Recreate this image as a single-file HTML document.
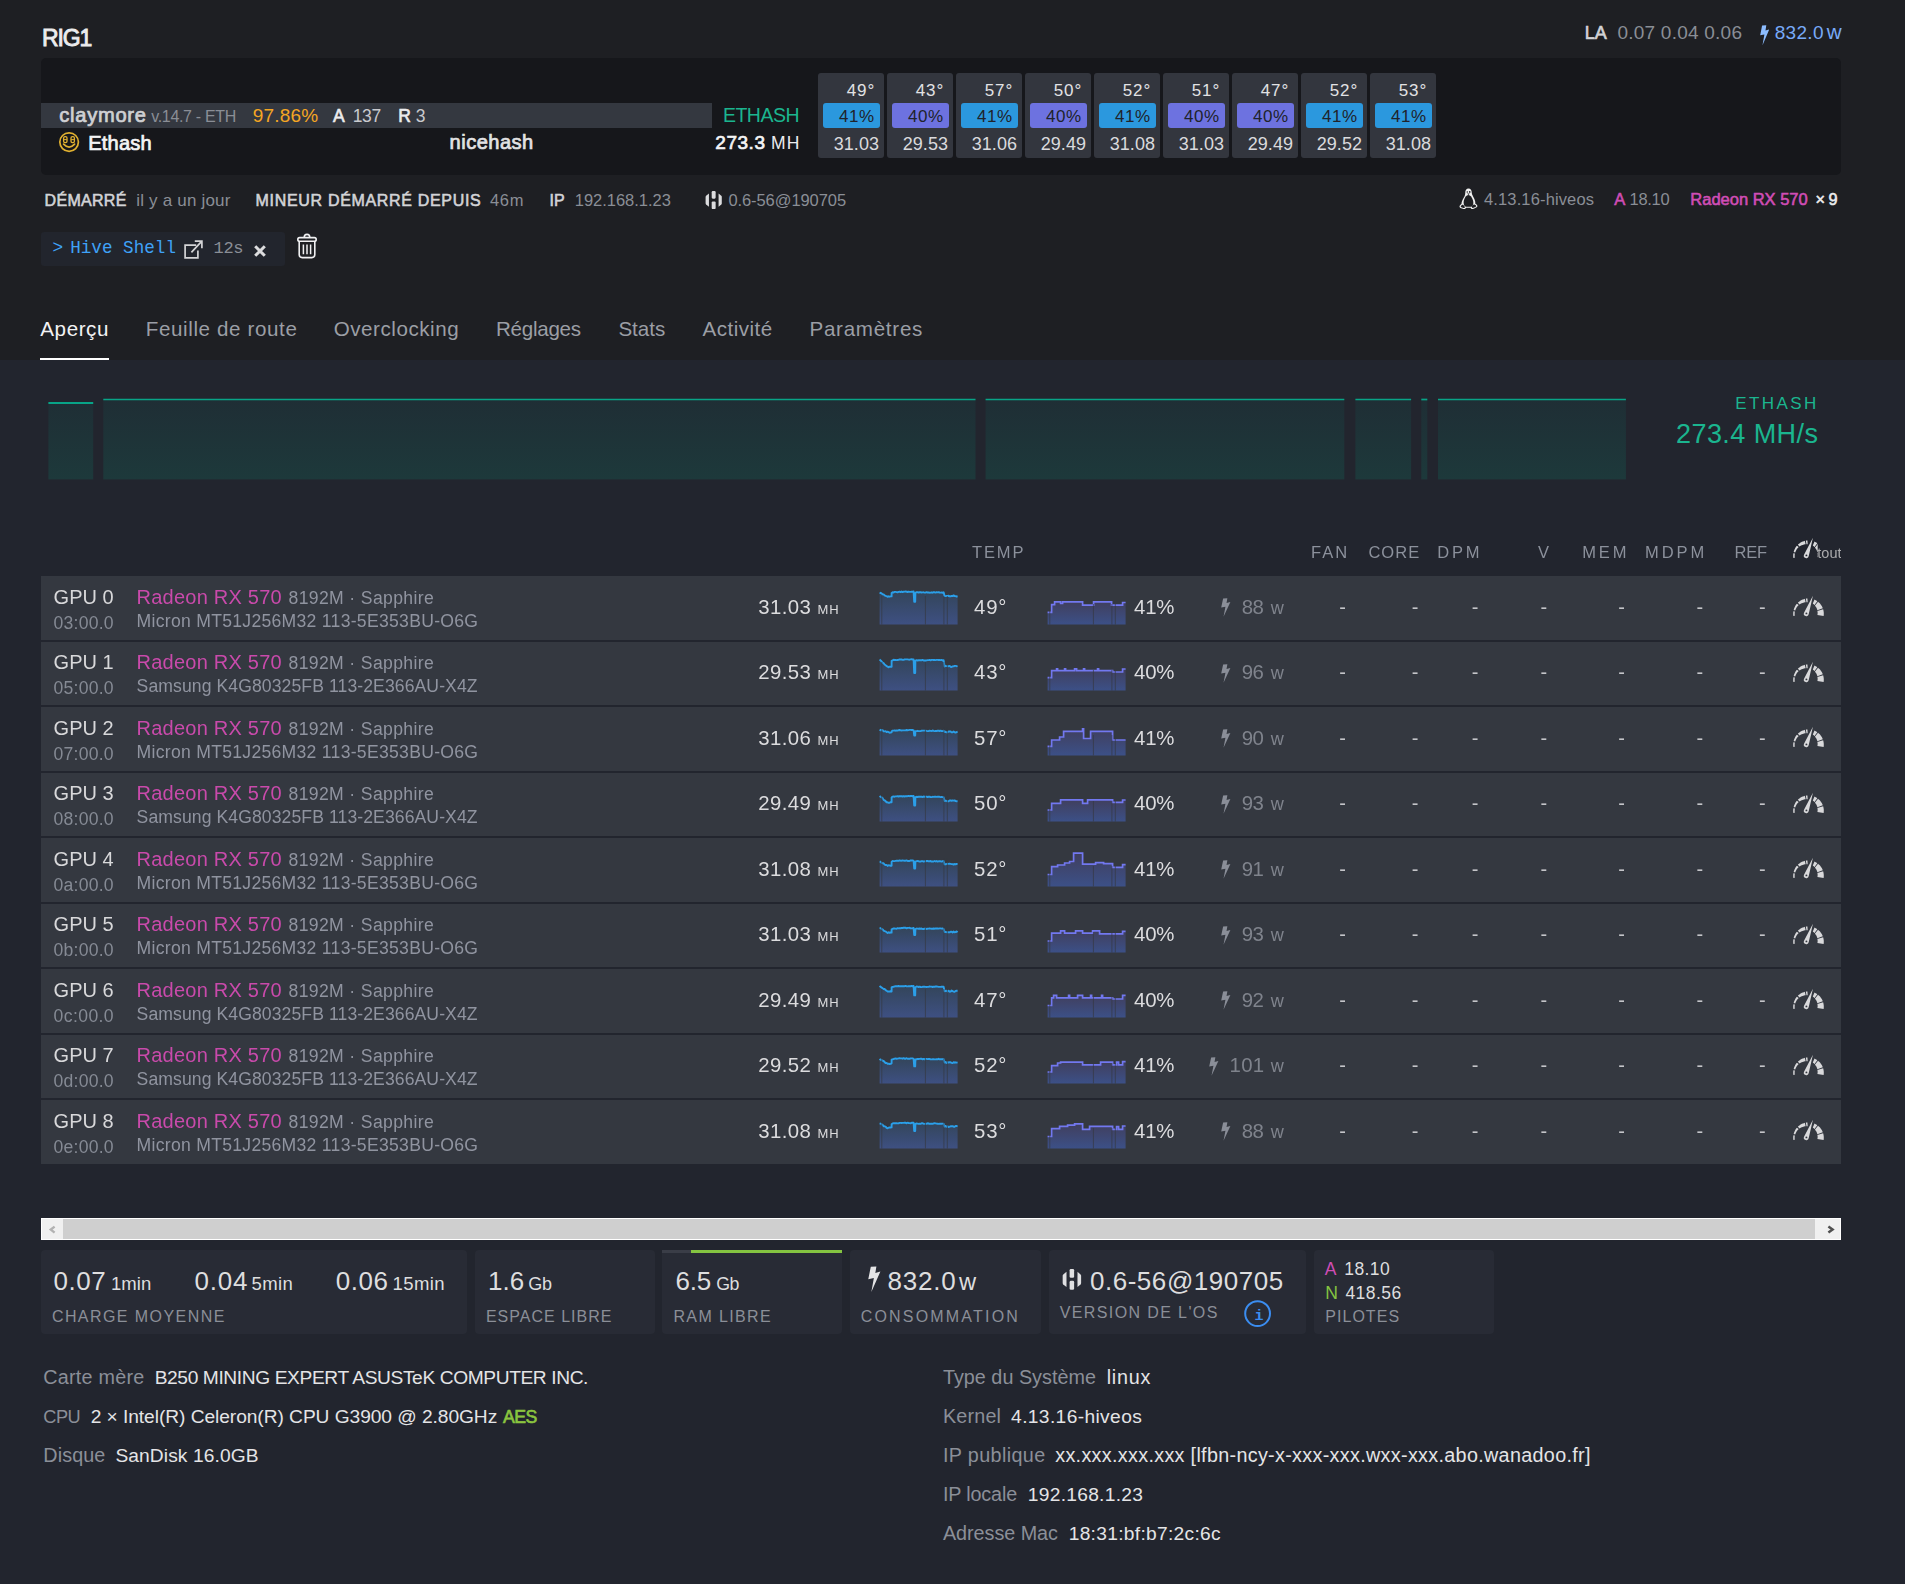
<!DOCTYPE html>
<html lang="fr"><head><meta charset="utf-8"><title>RIG1</title><style>html,body{margin:0;padding:0}body{width:1905px;height:1584px;overflow:hidden;background:#1e1f23;font-family:"Liberation Sans",sans-serif;position:relative}
.t{position:absolute;white-space:nowrap;line-height:1;display:block}.b{position:absolute;display:block}</style></head><body>
<div class="b" style="left:0px;top:360px;width:1905px;height:1224px;background:#22252e;"></div>
<span class="t" style="left:42.00px;top:27.01px;font-size:23.00px;color:#ececee;letter-spacing:-1.108px;-webkit-text-stroke:0.83px #ececee;">RIG1</span>
<span class="t" style="left:1584.80px;top:24.01px;font-size:18.00px;color:#d2d3d6;-webkit-text-stroke:0.65px #d2d3d6;">LA</span>
<span class="t" style="left:1617.40px;top:23.01px;font-size:19.00px;color:#8a8e96;letter-spacing:0.238px;">0.07 0.04 0.06</span>
<svg class="b" style="left:1759.6px;top:24.7px" width="9.6" height="20.6" viewBox="0 0 9.6 20.6" preserveAspectRatio="none"><polygon points="2.1,0.5 6.3,0.3 5.5,5.5 9.3,4.4 2.5,20.3 4.4,9.4 0.2,10.3" fill="#8cbcff"/></svg>
<span class="t" style="left:1774.70px;top:23.01px;font-size:19.00px;color:#78aaf8;letter-spacing:0.325px;">832.0</span>
<span class="t" style="left:1826.72px;top:22.02px;font-size:20.60px;color:#78aaf8;">w</span>
<div class="b" style="left:41px;top:58px;width:1800px;height:116.5px;background:#16171b;border-radius:5px;"></div>
<div class="b" style="left:41px;top:103px;width:671px;height:25px;background:#343840;"></div>
<span class="t" style="left:59.30px;top:105.00px;font-size:20.09px;color:#cfd0d3;letter-spacing:0.743px;-webkit-text-stroke:0.72px #cfd0d3;">claymore</span>
<span class="t" style="left:151.20px;top:109.00px;font-size:16.00px;color:#8a8e96;letter-spacing:-0.320px;">v.14.7 - ETH</span>
<span class="t" style="left:252.70px;top:106.01px;font-size:19.00px;color:#f5a623;letter-spacing:0.200px;">97.86%</span>
<span class="t" style="left:332.90px;top:108.00px;font-size:17.50px;color:#ececee;-webkit-text-stroke:0.63px #ececee;">A</span>
<span class="t" style="left:352.80px;top:108.00px;font-size:17.50px;color:#c9cace;letter-spacing:-0.425px;">137</span>
<span class="t" style="left:398.20px;top:108.00px;font-size:17.50px;color:#ececee;-webkit-text-stroke:0.63px #ececee;">R</span>
<span class="t" style="left:415.80px;top:108.00px;font-size:17.50px;color:#c9cace;">3</span>
<svg class="b" style="left:58px;top:131.1px" width="22" height="22" viewBox="0 0 22 22"><circle cx="11.1" cy="11.1" r="9.3" fill="none" stroke="#e0b030" stroke-width="1.7"/><path d="M5.6,13.2 Q11.1,19 16.6,13.2" fill="none" stroke="#e0b030" stroke-width="1.7" stroke-linecap="round"/><rect x="5.6" y="5.6" width="3.4" height="6" rx="1.4" fill="none" stroke="#e0b030" stroke-width="1.3"/><rect x="13" y="5.6" width="3.4" height="6" rx="1.4" fill="none" stroke="#e0b030" stroke-width="1.3"/><path d="M5.8,8.6h3M13.2,8.6h3" stroke="#e0b030" stroke-width="1"/></svg>
<span class="t" style="left:88.20px;top:132.50px;font-size:20.09px;color:#f4f4f5;letter-spacing:0.200px;-webkit-text-stroke:0.72px #f4f4f5;">Ethash</span>
<span class="t" style="left:449.60px;top:132.41px;font-size:20.09px;color:#e2e2e4;letter-spacing:0.475px;-webkit-text-stroke:0.72px #e2e2e4;">nicehash</span>
<span class="t" style="left:722.90px;top:106.01px;font-size:19.50px;color:#1bb58f;letter-spacing:-0.505px;">ETHASH</span>
<span class="t" style="left:715.30px;top:133.30px;font-size:19.00px;color:#f4f4f5;letter-spacing:0.525px;-webkit-text-stroke:0.68px #f4f4f5;">273.3</span>
<span class="t" style="left:771.10px;top:135.30px;font-size:17.50px;color:#ececee;letter-spacing:1.150px;">MH</span>
<div class="b" style="left:818px;top:73px;width:66px;height:85px;background:#33363e;border-radius:3px;"></div>
<div class="b" style="left:823px;top:103px;width:57px;height:25px;background:#2b98de;border-radius:3px;"></div>
<span class="t" style="left:846.70px;top:81.61px;font-size:17.00px;color:#e2e2e4;letter-spacing:0.975px;">49°</span>
<span class="t" style="left:838.90px;top:108.21px;font-size:17.00px;color:#20232b;letter-spacing:0.600px;">41%</span>
<span class="t" style="left:833.70px;top:134.91px;font-size:18.00px;color:#dadadd;letter-spacing:0.075px;">31.03</span>
<div class="b" style="left:887px;top:73px;width:66px;height:85px;background:#33363e;border-radius:3px;"></div>
<div class="b" style="left:892px;top:103px;width:57px;height:25px;background:#6d72e0;border-radius:3px;"></div>
<span class="t" style="left:915.70px;top:81.61px;font-size:17.00px;color:#e2e2e4;letter-spacing:0.975px;">43°</span>
<span class="t" style="left:907.90px;top:108.21px;font-size:17.00px;color:#20232b;letter-spacing:0.600px;">40%</span>
<span class="t" style="left:902.70px;top:134.91px;font-size:18.00px;color:#dadadd;letter-spacing:0.075px;">29.53</span>
<div class="b" style="left:956px;top:73px;width:66px;height:85px;background:#33363e;border-radius:3px;"></div>
<div class="b" style="left:961px;top:103px;width:57px;height:25px;background:#2b98de;border-radius:3px;"></div>
<span class="t" style="left:984.70px;top:81.61px;font-size:17.00px;color:#e2e2e4;letter-spacing:0.975px;">57°</span>
<span class="t" style="left:976.90px;top:108.21px;font-size:17.00px;color:#20232b;letter-spacing:0.600px;">41%</span>
<span class="t" style="left:971.70px;top:134.91px;font-size:18.00px;color:#dadadd;letter-spacing:0.075px;">31.06</span>
<div class="b" style="left:1025px;top:73px;width:66px;height:85px;background:#33363e;border-radius:3px;"></div>
<div class="b" style="left:1030px;top:103px;width:57px;height:25px;background:#6d72e0;border-radius:3px;"></div>
<span class="t" style="left:1053.70px;top:81.61px;font-size:17.00px;color:#e2e2e4;letter-spacing:0.975px;">50°</span>
<span class="t" style="left:1045.90px;top:108.21px;font-size:17.00px;color:#20232b;letter-spacing:0.600px;">40%</span>
<span class="t" style="left:1040.70px;top:134.91px;font-size:18.00px;color:#dadadd;letter-spacing:0.075px;">29.49</span>
<div class="b" style="left:1094px;top:73px;width:66px;height:85px;background:#33363e;border-radius:3px;"></div>
<div class="b" style="left:1099px;top:103px;width:57px;height:25px;background:#2b98de;border-radius:3px;"></div>
<span class="t" style="left:1122.70px;top:81.61px;font-size:17.00px;color:#e2e2e4;letter-spacing:0.975px;">52°</span>
<span class="t" style="left:1114.90px;top:108.21px;font-size:17.00px;color:#20232b;letter-spacing:0.600px;">41%</span>
<span class="t" style="left:1109.70px;top:134.91px;font-size:18.00px;color:#dadadd;letter-spacing:0.075px;">31.08</span>
<div class="b" style="left:1163px;top:73px;width:66px;height:85px;background:#33363e;border-radius:3px;"></div>
<div class="b" style="left:1168px;top:103px;width:57px;height:25px;background:#6d72e0;border-radius:3px;"></div>
<span class="t" style="left:1191.70px;top:81.61px;font-size:17.00px;color:#e2e2e4;letter-spacing:0.975px;">51°</span>
<span class="t" style="left:1183.90px;top:108.21px;font-size:17.00px;color:#20232b;letter-spacing:0.600px;">40%</span>
<span class="t" style="left:1178.70px;top:134.91px;font-size:18.00px;color:#dadadd;letter-spacing:0.075px;">31.03</span>
<div class="b" style="left:1232px;top:73px;width:66px;height:85px;background:#33363e;border-radius:3px;"></div>
<div class="b" style="left:1237px;top:103px;width:57px;height:25px;background:#6d72e0;border-radius:3px;"></div>
<span class="t" style="left:1260.70px;top:81.61px;font-size:17.00px;color:#e2e2e4;letter-spacing:0.975px;">47°</span>
<span class="t" style="left:1252.90px;top:108.21px;font-size:17.00px;color:#20232b;letter-spacing:0.600px;">40%</span>
<span class="t" style="left:1247.70px;top:134.91px;font-size:18.00px;color:#dadadd;letter-spacing:0.075px;">29.49</span>
<div class="b" style="left:1301px;top:73px;width:66px;height:85px;background:#33363e;border-radius:3px;"></div>
<div class="b" style="left:1306px;top:103px;width:57px;height:25px;background:#2b98de;border-radius:3px;"></div>
<span class="t" style="left:1329.70px;top:81.61px;font-size:17.00px;color:#e2e2e4;letter-spacing:0.975px;">52°</span>
<span class="t" style="left:1321.90px;top:108.21px;font-size:17.00px;color:#20232b;letter-spacing:0.600px;">41%</span>
<span class="t" style="left:1316.70px;top:134.91px;font-size:18.00px;color:#dadadd;letter-spacing:0.075px;">29.52</span>
<div class="b" style="left:1370px;top:73px;width:66px;height:85px;background:#33363e;border-radius:3px;"></div>
<div class="b" style="left:1375px;top:103px;width:57px;height:25px;background:#2b98de;border-radius:3px;"></div>
<span class="t" style="left:1398.70px;top:81.61px;font-size:17.00px;color:#e2e2e4;letter-spacing:0.975px;">53°</span>
<span class="t" style="left:1390.90px;top:108.21px;font-size:17.00px;color:#20232b;letter-spacing:0.600px;">41%</span>
<span class="t" style="left:1385.70px;top:134.91px;font-size:18.00px;color:#dadadd;letter-spacing:0.075px;">31.08</span>
<span class="t" style="left:44.60px;top:193.00px;font-size:16.00px;color:#d2d3d6;letter-spacing:0.300px;-webkit-text-stroke:0.58px #d2d3d6;">DÉMARRÉ</span>
<span class="t" style="left:136.30px;top:192.00px;font-size:17.00px;color:#8a8e96;letter-spacing:0.183px;">il y a un jour</span>
<span class="t" style="left:255.60px;top:193.00px;font-size:16.00px;color:#d2d3d6;letter-spacing:0.679px;-webkit-text-stroke:0.58px #d2d3d6;">MINEUR DÉMARRÉ DEPUIS</span>
<span class="t" style="left:490.00px;top:192.02px;font-size:16.50px;color:#8a8e96;letter-spacing:0.688px;">46m</span>
<span class="t" style="left:549.60px;top:193.00px;font-size:16.00px;color:#d2d3d6;letter-spacing:-0.125px;-webkit-text-stroke:0.58px #d2d3d6;">IP</span>
<span class="t" style="left:574.80px;top:192.02px;font-size:16.50px;color:#8a8e96;letter-spacing:-0.025px;">192.168.1.23</span>
<svg class="b" style="left:705.3px;top:191px" width="17.4" height="18.3" viewBox="0 0 17.4 18.3" preserveAspectRatio="none"><path fill="#dcdcde" d="M3.95,2.45 L3.95,15.8 L1.1,13.5 Q0.6,13 0.6,12.3 L0.6,6 Q0.6,5.3 1.1,4.8 Z"/><path fill="#dcdcde" d="M13.6,2.45 L13.6,15.8 L16.3,13.5 Q16.8,13 16.8,12.3 L16.8,6 Q16.8,5.3 16.3,4.8 Z"/><rect x="6.7" y="0.1" width="3.95" height="7.55" rx="1.1" fill="#dcdcde"/><rect x="6.7" y="10.4" width="3.95" height="7.75" rx="1.1" fill="#dcdcde"/></svg>
<span class="t" style="left:728.40px;top:192.02px;font-size:16.50px;color:#8a8e96;letter-spacing:-0.077px;">0.6-56@190705</span>
<svg class="b" style="left:1459px;top:187.7px" width="19" height="21.6" viewBox="0 0 20 22.5"><path fill="#f2f2f2" d="M10,0.4 C12.3,0.4 13.4,2.2 13.4,4.6 C13.4,7 15,8.6 16.2,11.4 C17,13.2 17.3,15 17.2,16.4 C18.6,17 19.7,18.2 19.3,19.4 C18.8,20.6 16.4,21.2 14.6,22 C13.2,22.4 12.4,21.4 12.2,20.8 L7.4,20.8 C7,21.8 6,22.4 4.6,21.9 C3,21.3 1,21 0.6,19.8 C0.3,18.6 1.4,17.6 2.6,16.8 C2.6,14.6 3.6,12.2 4.8,10.4 C6,8.6 6.6,7 6.6,4.6 C6.6,2.2 7.7,0.4 10,0.4Z"/><path fill="#1e1f23" d="M9.9,7.2 C12.2,7.2 13.6,9.8 14.6,12.6 C15.7,15.8 14.9,19 13,19.7 L7.2,19.7 C4.8,18.9 4.4,15.4 5.3,12.6 C6.3,9.6 7.6,7.2 9.9,7.2Z"/><path fill="#1e1f23" d="M3.4,17.6 C4.4,17 5.4,18.4 6,19.6 C6.4,20.6 5.6,21.2 4.8,20.9 C3.8,20.5 2.4,20.2 1.9,19.6 C1.6,18.9 2.6,18.2 3.4,17.6Z M16.6,17.4 C17.6,17.8 18.4,18.6 18.2,19.2 C17.6,19.9 16,20.4 14.8,20.9 C14,21.1 13.4,20.4 13.6,19.4 C13.8,18.2 15.4,17 16.6,17.4Z"/><circle cx="8.7" cy="4" r="0.8" fill="#1e1f23"/><circle cx="11.3" cy="4" r="0.9" fill="#1e1f23"/><path fill="#1e1f23" d="M8.6,5.6 L11.4,5.6 L10,7.2Z"/></svg>
<span class="t" style="left:1484.00px;top:191.02px;font-size:16.50px;color:#8a8e96;letter-spacing:0.135px;">4.13.16-hiveos</span>
<span class="t" style="left:1614.20px;top:191.02px;font-size:16.50px;color:#d04db5;-webkit-text-stroke:0.59px #d04db5;">A</span>
<span class="t" style="left:1629.60px;top:191.02px;font-size:16.50px;color:#8a8e96;letter-spacing:-0.312px;">18.10</span>
<span class="t" style="left:1690.30px;top:191.02px;font-size:16.50px;color:#d04db5;-webkit-text-stroke:0.59px #d04db5;">Radeon RX 570</span>
<span class="t" style="left:1815.40px;top:191.01px;font-size:16.25px;color:#ececee;letter-spacing:-0.500px;-webkit-text-stroke:0.58px #ececee;">× 9</span>
<div class="b" style="left:41px;top:232px;width:244px;height:34px;background:#22252d;border-radius:3px;"></div>
<span class="t" style="left:52.40px;top:238.21px;font-size:18.00px;color:#3fa2f7;">&gt;</span>
<span class="t" style="left:70.20px;top:239.61px;font-size:17.60px;color:#3fa2f7;font-family:'Liberation Mono',monospace;letter-spacing:0.019px;">Hive Shell</span>
<svg class="b" style="left:183px;top:238.5px" width="21" height="21" viewBox="0 0 21 21"><path d="M13.2,6.2 H2.1 V18.8 H14.9 V11.4" fill="none" stroke="#d4d4d6" stroke-width="1.7"/><path d="M8.4,13.4 L18.4,2.6 M11.8,2.2 H18.9 V9.2" fill="none" stroke="#d4d4d6" stroke-width="1.7"/></svg>
<span class="t" style="left:213.60px;top:240.20px;font-size:17.05px;color:#8a8e96;font-family:'Liberation Mono',monospace;letter-spacing:-0.425px;">12s</span>
<svg class="b" style="left:253px;top:244px" width="14" height="14" viewBox="0 0 14 14"><path d="M2.2,2.2 L11.8,11.8 M11.8,2.2 L2.2,11.8" stroke="#dcdcde" stroke-width="3" stroke-linecap="butt"/></svg>
<svg class="b" style="left:296px;top:233px" width="22" height="26" viewBox="0 0 22 26"><g fill="none" stroke="#f0f0f2" stroke-width="1.6"><path d="M3.2,8.6 V21.6 Q3.2,24.6 6.2,24.6 H15.8 Q18.8,24.6 18.8,21.6 V8.6"/><rect x="1.8" y="4.6" width="18.4" height="3.6" rx="1.8"/><path d="M8.2,4.4 Q8.2,1.4 11,1.4 Q13.8,1.4 13.8,4.4"/><path d="M7.4,11.4 V21.2 M11,11.4 V21.2 M14.6,11.4 V21.2" stroke-width="1.5"/></g></svg>
<span class="t" style="left:40.30px;top:319.02px;font-size:20.60px;color:#f2f2f4;letter-spacing:0.570px;">Aperçu</span>
<span class="t" style="left:145.70px;top:319.02px;font-size:20.60px;color:#9b9ea5;letter-spacing:0.613px;">Feuille de route</span>
<span class="t" style="left:333.70px;top:319.02px;font-size:20.60px;color:#9b9ea5;letter-spacing:0.534px;">Overclocking</span>
<span class="t" style="left:496.00px;top:319.02px;font-size:20.60px;color:#9b9ea5;letter-spacing:-0.286px;">Réglages</span>
<span class="t" style="left:618.40px;top:319.02px;font-size:20.60px;color:#9b9ea5;letter-spacing:-0.025px;">Stats</span>
<span class="t" style="left:702.60px;top:319.02px;font-size:20.60px;color:#9b9ea5;letter-spacing:0.461px;">Activité</span>
<span class="t" style="left:809.50px;top:319.02px;font-size:20.60px;color:#9b9ea5;letter-spacing:0.711px;">Paramètres</span>
<div class="b" style="left:40px;top:358px;width:69px;height:2px;background:#ffffff;"></div>
<svg class="b" style="left:0;top:390px" width="1700" height="100" viewBox="0 390 1700 100"><defs><linearGradient id="gc" gradientUnits="userSpaceOnUse" x1="0" y1="399" x2="0" y2="479"><stop offset="0" stop-color="#1f2e35"/><stop offset="1" stop-color="#1d393b"/></linearGradient></defs><rect x="48.4" y="402.5" width="44.8" height="76.89999999999998" fill="url(#gc)"/><path d="M48.4,403.0 H93.2" stroke="#08a487" stroke-width="2"/><rect x="103.3" y="399" width="872.2" height="80.39999999999998" fill="url(#gc)"/><path d="M103.3,399.5 H975.5" stroke="#08a487" stroke-width="1.7"/><rect x="985.6" y="399" width="358.7" height="80.39999999999998" fill="url(#gc)"/><path d="M985.6,399.5 H1344.3" stroke="#08a487" stroke-width="1.7"/><rect x="1355.4" y="399" width="55.7" height="80.39999999999998" fill="url(#gc)"/><path d="M1355.4,399.5 H1411.1" stroke="#08a487" stroke-width="1.7"/><rect x="1421.3" y="399" width="6.0" height="80.39999999999998" fill="url(#gc)"/><path d="M1421.3,399.5 H1427.3" stroke="#08a487" stroke-width="1.7"/><rect x="1438" y="399" width="187.9" height="80.39999999999998" fill="url(#gc)"/><path d="M1438,399.5 H1625.9" stroke="#08a487" stroke-width="1.7"/></svg>
<span class="t" style="left:1735.30px;top:395.00px;font-size:17.00px;color:#1bb58f;letter-spacing:2.420px;">ETHASH</span>
<span class="t" style="left:1676.00px;top:420.72px;font-size:27.00px;color:#1bb58f;letter-spacing:0.433px;">273.4 MH/s</span>
<div class="b" style="left:0;top:530px;width:1905px;height:640px;will-change:transform">
<span class="t" style="left:971.90px;top:14.11px;font-size:16.50px;color:#8c919c;letter-spacing:1.942px;">TEMP</span>
<span class="t" style="left:1311.00px;top:14.11px;font-size:16.50px;color:#8c919c;letter-spacing:1.987px;">FAN</span>
<span class="t" style="left:1368.40px;top:14.11px;font-size:16.50px;color:#8c919c;letter-spacing:1.025px;">CORE</span>
<span class="t" style="left:1437.20px;top:14.11px;font-size:16.50px;color:#8c919c;letter-spacing:2.837px;">DPM</span>
<span class="t" style="left:1537.90px;top:14.11px;font-size:16.50px;color:#8c919c;">V</span>
<span class="t" style="left:1582.20px;top:14.11px;font-size:16.50px;color:#8c919c;letter-spacing:2.850px;">MEM</span>
<span class="t" style="left:1645.10px;top:14.11px;font-size:16.50px;color:#8c919c;letter-spacing:2.908px;">MDPM</span>
<span class="t" style="left:1734.50px;top:14.11px;font-size:16.50px;color:#8c919c;letter-spacing:-0.200px;">REF</span>
<svg class="b" style="left:1792.6px;top:7.1px;clip-path:inset(0 6.4px 0 0);" width="31.5" height="22" viewBox="0 -1 31.5 22"><path fill="#d9d9db" d="M0.39,20.09 L0.31,19.50 L0.25,18.90 L0.21,18.30 L0.20,17.70 L0.21,17.10 L0.25,16.50 L0.31,15.90 L0.39,15.31 L1.87,15.54 L1.78,16.08 L1.72,16.62 L1.67,17.16 L1.65,17.70 L1.65,18.24 L1.67,18.79 L1.71,19.33 L1.77,19.87Z M0.65,14.00 L0.90,13.13 L1.19,12.28 L1.54,11.45 L1.93,10.64 L2.37,9.85 L2.85,9.09 L3.38,8.36 L3.95,7.66 L5.61,9.11 L5.07,9.66 L4.55,10.24 L4.06,10.86 L3.61,11.51 L3.20,12.19 L2.83,12.90 L2.50,13.63 L2.21,14.39Z M4.87,6.69 L5.61,6.02 L6.40,5.40 L7.22,4.83 L8.08,4.32 L8.97,3.86 L9.89,3.46 L10.84,3.13 L11.80,2.85 L12.65,6.25 L11.86,6.34 L11.08,6.49 L10.31,6.69 L9.54,6.94 L8.78,7.25 L8.03,7.61 L7.31,8.03 L6.61,8.49Z M12.84,2.63 L13.04,2.60 L13.24,2.57 L13.44,2.54 L13.64,2.51 L13.83,2.49 L14.03,2.47 L14.23,2.45 L14.43,2.44 L14.69,6.13 L14.54,6.13 L14.39,6.13 L14.23,6.13 L14.08,6.14 L13.93,6.14 L13.77,6.15 L13.62,6.16 L13.47,6.18Z M21.48,3.62 L21.84,3.78 L22.21,3.95 L22.56,4.13 L22.92,4.32 L23.27,4.52 L23.61,4.72 L23.94,4.94 L24.28,5.17 L21.52,9.10 L21.33,8.89 L21.13,8.69 L20.92,8.49 L20.71,8.30 L20.49,8.11 L20.27,7.93 L20.04,7.75 L19.80,7.57Z M25.02,5.73 L25.80,6.39 L26.53,7.10 L27.21,7.85 L27.84,8.65 L28.41,9.49 L28.93,10.37 L29.39,11.28 L29.78,12.22 L24.37,14.30 L24.21,13.67 L24.01,13.05 L23.77,12.44 L23.48,11.85 L23.15,11.26 L22.78,10.70 L22.37,10.16 L21.91,9.64Z M30.13,13.23 L30.36,14.06 L30.54,14.91 L30.68,15.77 L30.76,16.63 L30.80,17.50 L30.79,18.37 L30.72,19.23 L30.61,20.09 L24.39,19.11 L24.49,18.61 L24.57,18.10 L24.61,17.58 L24.63,17.06 L24.61,16.54 L24.57,16.02 L24.50,15.50 L24.39,14.98Z "/><path fill="#d9d9db" stroke="#22252e" stroke-width="1.5" stroke-linejoin="round" style="paint-order:stroke" d="M19.9,-0.3 L15.75,18.0 A2.45,2.45 0 1 1 11.15,16.5 Z"/><circle cx="13.4" cy="17.4" r="0.95" fill="#22252e"/></svg>
<div class="b" style="left:1817.7px;top:10px;width:23.3px;height:22px;background:#22252e"></div><div class="b" style="left:1816.5px;top:10px;width:24.5px;height:22px;overflow:hidden"><span class="t" style="left:0.8px;top:5.63px;font-size:14.5px;color:#ababad">tout</span></div>
<svg width="0" height="0" style="position:absolute"><defs><linearGradient id="gt" x1="0" y1="0" x2="0" y2="1"><stop offset="0" stop-color="#33455a"/><stop offset="1" stop-color="#3e5082"/></linearGradient><linearGradient id="gf" x1="0" y1="0" x2="0" y2="1"><stop offset="0" stop-color="#403f5e"/><stop offset="1" stop-color="#3c5087"/></linearGradient></defs></svg>
<div class="b" style="left:41px;top:46px;width:1800px;height:63.5px;background:#343840;"></div>
<span class="t" style="left:53.60px;top:57.01px;font-size:20.00px;color:#d8d8da;letter-spacing:0.025px;">GPU 0</span>
<span class="t" style="left:53.60px;top:84.61px;font-size:17.60px;color:#858a94;letter-spacing:0.225px;">03:00.0</span>
<span class="t" style="left:136.60px;top:57.01px;font-size:20.00px;color:#c94aab;letter-spacing:0.227px;">Radeon RX 570</span>
<span class="t" style="left:288.50px;top:60.01px;font-size:17.60px;color:#9094a0;letter-spacing:0.362px;">8192M · Sapphire</span>
<span class="t" style="left:136.60px;top:83.01px;font-size:17.60px;color:#9094a0;letter-spacing:0.280px;">Micron MT51J256M32 113-5E353BU-O6G</span>
<span class="t" style="left:758.30px;top:67.01px;font-size:20.40px;color:#dcdcde;letter-spacing:0.400px;">31.03</span>
<span class="t" style="left:817.40px;top:73.00px;font-size:13.00px;color:#dcdcde;letter-spacing:0.950px;">MH</span>
<svg class="b" style="left:870px;top:46px" width="270" height="63" viewBox="870 576 270 63"><polygon points="879.6,624.5 879.6,592.6 880.6,593.0 881.6,593.4 882.6,594.4 883.6,594.4 884.6,595.4 885.6,595.8 886.6,596.1 887.6,596.8 888.6,596.3 889.6,596.7 890.6,596.4 891.6,596.4 891.6,593.0 892.6,592.3 893.6,592.5 894.6,591.9 895.6,591.9 896.6,592.1 897.6,592.3 898.6,591.9 899.6,591.7 900.6,592.1 901.6,591.5 902.6,592.1 903.6,591.7 904.6,591.6 905.6,591.5 906.6,591.7 907.6,592.0 908.6,591.6 909.6,591.9 910.6,591.9 911.6,591.7 912.6,591.8 913.6,591.5 914.2,601.8 915.2,601.8 915.4,592.8 916.6,592.1 917.6,592.2 918.6,592.5 919.6,592.3 920.6,592.3 921.6,592.5 922.6,592.4 923.6,592.3 924.6,592.6 925.6,592.5 926.6,592.2 927.6,592.5 928.6,592.4 929.6,592.7 930.6,592.6 931.6,592.3 932.6,592.7 933.6,592.1 934.6,592.3 935.6,592.6 936.6,592.2 937.6,592.4 938.6,592.1 939.6,592.5 940.6,592.6 941.6,592.5 942.6,592.7 943.6,592.3 944.6,596.0 945.6,596.1 946.6,596.0 947.6,596.0 948.6,595.8 949.6,596.3 950.6,596.4 951.6,595.9 952.6,596.1 953.6,595.4 954.6,596.1 955.6,596.1 956.6,596.5 957.6,596.3 957.6,624.5" fill="url(#gt)"/><polyline points="879.6,592.6 880.6,593.0 881.6,593.4 882.6,594.4 883.6,594.4 884.6,595.4 885.6,595.8 886.6,596.1 887.6,596.8 888.6,596.3 889.6,596.7 890.6,596.4 891.6,596.4 891.6,593.0 892.6,592.3 893.6,592.5 894.6,591.9 895.6,591.9 896.6,592.1 897.6,592.3 898.6,591.9 899.6,591.7 900.6,592.1 901.6,591.5 902.6,592.1 903.6,591.7 904.6,591.6 905.6,591.5 906.6,591.7 907.6,592.0 908.6,591.6 909.6,591.9 910.6,591.9 911.6,591.7 912.6,591.8 913.6,591.5 914.2,601.8 915.2,601.8 915.4,592.8 916.6,592.1 917.6,592.2 918.6,592.5 919.6,592.3 920.6,592.3 921.6,592.5 922.6,592.4 923.6,592.3 924.6,592.6 925.6,592.5 926.6,592.2 927.6,592.5 928.6,592.4 929.6,592.7 930.6,592.6 931.6,592.3 932.6,592.7 933.6,592.1 934.6,592.3 935.6,592.6 936.6,592.2 937.6,592.4 938.6,592.1 939.6,592.5 940.6,592.6 941.6,592.5 942.6,592.7 943.6,592.3 944.6,596.0 945.6,596.1 946.6,596.0 947.6,596.0 948.6,595.8 949.6,596.3 950.6,596.4 951.6,595.9 952.6,596.1 953.6,595.4 954.6,596.1 955.6,596.1 956.6,596.5 957.6,596.3" fill="none" stroke="#2b9fe9" stroke-width="1.9" stroke-linejoin="round"/><path d="M881.8000000000001,596.0 V624.5" stroke="#343840" stroke-width="0.9" opacity="0.75"/><path d="M925.4,596.0 V624.5" stroke="#343840" stroke-width="0.9" opacity="0.75"/><path d="M943.9,596.0 V624.5" stroke="#343840" stroke-width="0.9" opacity="0.75"/><path d="M947.3000000000001,596.0 V624.5" stroke="#343840" stroke-width="0.9" opacity="0.75"/><polygon points="1047.6,624.5 1047.6,612.3 1051.6,612.3 1051.6,604.6 1054.6,604.6 1054.6,601.8 1060.6,601.8 1060.6,603.5 1062.6,603.5 1062.6,601.8 1082.6,601.8 1082.6,605.2 1093.6,605.2 1093.6,601.8 1111.6,601.8 1111.6,605.2 1122.6,605.2 1122.6,602.5 1125.6,602.5 1125.6,624.5" fill="url(#gf)"/><polyline points="1047.6,612.3 1051.6,612.3 1051.6,604.6 1054.6,604.6 1054.6,601.8 1060.6,601.8 1060.6,603.5 1062.6,603.5 1062.6,601.8 1082.6,601.8 1082.6,605.2 1093.6,605.2 1093.6,601.8 1111.6,601.8 1111.6,605.2 1122.6,605.2 1122.6,602.5 1125.6,602.5" fill="none" stroke="#7278f0" stroke-width="1.7"/><path d="M1049.8,604.0 V624.5" stroke="#343840" stroke-width="0.9" opacity="0.75"/><path d="M1093.3999999999999,604.0 V624.5" stroke="#343840" stroke-width="0.9" opacity="0.75"/><path d="M1111.8999999999999,604.0 V624.5" stroke="#343840" stroke-width="0.9" opacity="0.75"/><path d="M1115.3,604.0 V624.5" stroke="#343840" stroke-width="0.9" opacity="0.75"/></svg>
<span class="t" style="left:974.10px;top:67.01px;font-size:20.40px;color:#dcdcde;letter-spacing:0.712px;">49°</span>
<span class="t" style="left:1134.10px;top:67.01px;font-size:20.40px;color:#dcdcde;letter-spacing:-0.287px;">41%</span>
<svg class="b" style="left:1221.3px;top:68.2px" width="9.7" height="19.1" viewBox="0 0 9.6 20.6" preserveAspectRatio="none"><polygon points="2.1,0.5 6.3,0.3 5.5,5.5 9.3,4.4 2.5,20.3 4.4,9.4 0.2,10.3" fill="#8a8e98"/></svg>
<span class="t" style="left:1241.70px;top:67.01px;font-size:20.40px;color:#7f838c;letter-spacing:-0.450px;">88</span>
<span class="t" style="left:1270.72px;top:69.01px;font-size:18.13px;color:#7f838c;">w</span>
<span class="t" style="left:1339.30px;top:67.01px;font-size:20.00px;color:#c4c5c9;">-</span>
<span class="t" style="left:1411.70px;top:67.01px;font-size:20.00px;color:#c4c5c9;">-</span>
<span class="t" style="left:1471.70px;top:67.01px;font-size:20.00px;color:#c4c5c9;">-</span>
<span class="t" style="left:1540.50px;top:67.01px;font-size:20.00px;color:#c4c5c9;">-</span>
<span class="t" style="left:1618.30px;top:67.01px;font-size:20.00px;color:#c4c5c9;">-</span>
<span class="t" style="left:1696.40px;top:67.01px;font-size:20.00px;color:#c4c5c9;">-</span>
<span class="t" style="left:1759.00px;top:67.01px;font-size:20.00px;color:#c4c5c9;">-</span>
<svg class="b" style="left:1792.6px;top:65px;" width="31.5" height="22" viewBox="0 -1 31.5 22"><path fill="#d9d9db" d="M0.39,20.09 L0.31,19.50 L0.25,18.90 L0.21,18.30 L0.20,17.70 L0.21,17.10 L0.25,16.50 L0.31,15.90 L0.39,15.31 L1.87,15.54 L1.78,16.08 L1.72,16.62 L1.67,17.16 L1.65,17.70 L1.65,18.24 L1.67,18.79 L1.71,19.33 L1.77,19.87Z M0.65,14.00 L0.90,13.13 L1.19,12.28 L1.54,11.45 L1.93,10.64 L2.37,9.85 L2.85,9.09 L3.38,8.36 L3.95,7.66 L5.61,9.11 L5.07,9.66 L4.55,10.24 L4.06,10.86 L3.61,11.51 L3.20,12.19 L2.83,12.90 L2.50,13.63 L2.21,14.39Z M4.87,6.69 L5.61,6.02 L6.40,5.40 L7.22,4.83 L8.08,4.32 L8.97,3.86 L9.89,3.46 L10.84,3.13 L11.80,2.85 L12.65,6.25 L11.86,6.34 L11.08,6.49 L10.31,6.69 L9.54,6.94 L8.78,7.25 L8.03,7.61 L7.31,8.03 L6.61,8.49Z M12.84,2.63 L13.04,2.60 L13.24,2.57 L13.44,2.54 L13.64,2.51 L13.83,2.49 L14.03,2.47 L14.23,2.45 L14.43,2.44 L14.69,6.13 L14.54,6.13 L14.39,6.13 L14.23,6.13 L14.08,6.14 L13.93,6.14 L13.77,6.15 L13.62,6.16 L13.47,6.18Z M21.48,3.62 L21.84,3.78 L22.21,3.95 L22.56,4.13 L22.92,4.32 L23.27,4.52 L23.61,4.72 L23.94,4.94 L24.28,5.17 L21.52,9.10 L21.33,8.89 L21.13,8.69 L20.92,8.49 L20.71,8.30 L20.49,8.11 L20.27,7.93 L20.04,7.75 L19.80,7.57Z M25.02,5.73 L25.80,6.39 L26.53,7.10 L27.21,7.85 L27.84,8.65 L28.41,9.49 L28.93,10.37 L29.39,11.28 L29.78,12.22 L24.37,14.30 L24.21,13.67 L24.01,13.05 L23.77,12.44 L23.48,11.85 L23.15,11.26 L22.78,10.70 L22.37,10.16 L21.91,9.64Z M30.13,13.23 L30.36,14.06 L30.54,14.91 L30.68,15.77 L30.76,16.63 L30.80,17.50 L30.79,18.37 L30.72,19.23 L30.61,20.09 L24.39,19.11 L24.49,18.61 L24.57,18.10 L24.61,17.58 L24.63,17.06 L24.61,16.54 L24.57,16.02 L24.50,15.50 L24.39,14.98Z "/><path fill="#d9d9db" stroke="#343840" stroke-width="1.5" stroke-linejoin="round" style="paint-order:stroke" d="M19.9,-0.3 L15.75,18.0 A2.45,2.45 0 1 1 11.15,16.5 Z"/><circle cx="13.4" cy="17.4" r="0.95" fill="#343840"/></svg>
<div class="b" style="left:41px;top:111.5px;width:1800px;height:63.5px;background:#343840;"></div>
<span class="t" style="left:53.60px;top:122.20px;font-size:20.00px;color:#d8d8da;letter-spacing:0.025px;">GPU 1</span>
<span class="t" style="left:53.60px;top:149.81px;font-size:17.60px;color:#858a94;letter-spacing:0.225px;">05:00.0</span>
<span class="t" style="left:136.60px;top:122.20px;font-size:20.00px;color:#c94aab;letter-spacing:0.227px;">Radeon RX 570</span>
<span class="t" style="left:288.50px;top:125.20px;font-size:17.60px;color:#9094a0;letter-spacing:0.362px;">8192M · Sapphire</span>
<span class="t" style="left:136.60px;top:148.20px;font-size:17.60px;color:#9094a0;letter-spacing:0.087px;">Samsung K4G80325FB 113-2E366AU-X4Z</span>
<span class="t" style="left:758.30px;top:132.21px;font-size:20.40px;color:#dcdcde;letter-spacing:0.400px;">29.53</span>
<span class="t" style="left:817.40px;top:138.21px;font-size:13.00px;color:#dcdcde;letter-spacing:0.950px;">MH</span>
<svg class="b" style="left:870px;top:111.5px" width="270" height="63" viewBox="870 641.5 270 63"><polygon points="879.6,690.0 879.6,659.1 880.6,659.9 881.6,661.0 882.6,662.2 883.6,662.6 884.6,664.0 885.6,664.7 886.6,665.6 887.6,666.1 888.6,666.8 889.6,666.1 890.6,666.2 891.6,666.4 891.6,660.3 892.6,659.9 893.6,659.3 894.6,659.5 895.6,659.5 896.6,659.6 897.6,659.5 898.6,659.4 899.6,658.9 900.6,659.0 901.6,659.0 902.6,659.4 903.6,659.4 904.6,658.9 905.6,658.9 906.6,658.9 907.6,658.9 908.6,659.1 909.6,659.2 910.6,658.9 911.6,658.8 912.6,659.0 913.6,659.0 914.2,672.5 915.2,672.5 915.4,660.1 916.6,659.7 917.6,660.0 918.6,659.8 919.6,659.7 920.6,659.8 921.6,659.8 922.6,659.4 923.6,660.0 924.6,659.9 925.6,660.0 926.6,659.9 927.6,659.6 928.6,659.6 929.6,659.4 930.6,659.8 931.6,659.4 932.6,659.4 933.6,659.5 934.6,659.5 935.6,659.6 936.6,659.4 937.6,659.4 938.6,659.5 939.6,659.4 940.6,659.6 941.6,659.4 942.6,660.0 943.6,659.8 944.6,666.0 945.6,665.5 946.6,665.6 947.6,665.7 948.6,665.7 949.6,665.4 950.6,666.3 951.6,666.5 952.6,665.9 953.6,665.9 954.6,665.4 955.6,665.4 956.6,665.7 957.6,665.6 957.6,690.0" fill="url(#gt)"/><polyline points="879.6,659.1 880.6,659.9 881.6,661.0 882.6,662.2 883.6,662.6 884.6,664.0 885.6,664.7 886.6,665.6 887.6,666.1 888.6,666.8 889.6,666.1 890.6,666.2 891.6,666.4 891.6,660.3 892.6,659.9 893.6,659.3 894.6,659.5 895.6,659.5 896.6,659.6 897.6,659.5 898.6,659.4 899.6,658.9 900.6,659.0 901.6,659.0 902.6,659.4 903.6,659.4 904.6,658.9 905.6,658.9 906.6,658.9 907.6,658.9 908.6,659.1 909.6,659.2 910.6,658.9 911.6,658.8 912.6,659.0 913.6,659.0 914.2,672.5 915.2,672.5 915.4,660.1 916.6,659.7 917.6,660.0 918.6,659.8 919.6,659.7 920.6,659.8 921.6,659.8 922.6,659.4 923.6,660.0 924.6,659.9 925.6,660.0 926.6,659.9 927.6,659.6 928.6,659.6 929.6,659.4 930.6,659.8 931.6,659.4 932.6,659.4 933.6,659.5 934.6,659.5 935.6,659.6 936.6,659.4 937.6,659.4 938.6,659.5 939.6,659.4 940.6,659.6 941.6,659.4 942.6,660.0 943.6,659.8 944.6,666.0 945.6,665.5 946.6,665.6 947.6,665.7 948.6,665.7 949.6,665.4 950.6,666.3 951.6,666.5 952.6,665.9 953.6,665.9 954.6,665.4 955.6,665.4 956.6,665.7 957.6,665.6" fill="none" stroke="#2b9fe9" stroke-width="1.9" stroke-linejoin="round"/><path d="M881.8000000000001,661.5 V690.0" stroke="#343840" stroke-width="0.9" opacity="0.75"/><path d="M925.4,661.5 V690.0" stroke="#343840" stroke-width="0.9" opacity="0.75"/><path d="M943.9,661.5 V690.0" stroke="#343840" stroke-width="0.9" opacity="0.75"/><path d="M947.3000000000001,661.5 V690.0" stroke="#343840" stroke-width="0.9" opacity="0.75"/><polygon points="1047.6,690.0 1047.6,677.1 1051.6,677.1 1051.6,670.2 1056.6,670.2 1056.6,668.3 1057.6,668.3 1057.6,670.2 1064.6,670.2 1064.6,668.3 1065.6,668.3 1065.6,670.2 1074.6,670.2 1074.6,668.3 1076.6,668.3 1076.6,670.2 1083.6,670.2 1083.6,668.3 1084.6,668.3 1084.6,670.2 1097.6,670.2 1097.6,668.3 1098.6,668.3 1098.6,670.2 1112.6,670.2 1112.6,671.5 1122.6,671.5 1122.6,668.5 1125.6,668.5 1125.6,690.0" fill="url(#gf)"/><polyline points="1047.6,677.1 1051.6,677.1 1051.6,670.2 1056.6,670.2 1056.6,668.3 1057.6,668.3 1057.6,670.2 1064.6,670.2 1064.6,668.3 1065.6,668.3 1065.6,670.2 1074.6,670.2 1074.6,668.3 1076.6,668.3 1076.6,670.2 1083.6,670.2 1083.6,668.3 1084.6,668.3 1084.6,670.2 1097.6,670.2 1097.6,668.3 1098.6,668.3 1098.6,670.2 1112.6,670.2 1112.6,671.5 1122.6,671.5 1122.6,668.5 1125.6,668.5" fill="none" stroke="#7278f0" stroke-width="1.7"/><path d="M1049.8,669.5 V690.0" stroke="#343840" stroke-width="0.9" opacity="0.75"/><path d="M1093.3999999999999,669.5 V690.0" stroke="#343840" stroke-width="0.9" opacity="0.75"/><path d="M1111.8999999999999,669.5 V690.0" stroke="#343840" stroke-width="0.9" opacity="0.75"/><path d="M1115.3,669.5 V690.0" stroke="#343840" stroke-width="0.9" opacity="0.75"/></svg>
<span class="t" style="left:974.10px;top:132.21px;font-size:20.40px;color:#dcdcde;letter-spacing:0.712px;">43°</span>
<span class="t" style="left:1134.10px;top:132.21px;font-size:20.40px;color:#dcdcde;letter-spacing:-0.287px;">40%</span>
<svg class="b" style="left:1221.3px;top:133.7px" width="9.7" height="19.1" viewBox="0 0 9.6 20.6" preserveAspectRatio="none"><polygon points="2.1,0.5 6.3,0.3 5.5,5.5 9.3,4.4 2.5,20.3 4.4,9.4 0.2,10.3" fill="#8a8e98"/></svg>
<span class="t" style="left:1241.70px;top:132.21px;font-size:20.40px;color:#7f838c;letter-spacing:-0.450px;">96</span>
<span class="t" style="left:1270.72px;top:134.21px;font-size:18.13px;color:#7f838c;">w</span>
<span class="t" style="left:1339.30px;top:132.20px;font-size:20.00px;color:#c4c5c9;">-</span>
<span class="t" style="left:1411.70px;top:132.20px;font-size:20.00px;color:#c4c5c9;">-</span>
<span class="t" style="left:1471.70px;top:132.20px;font-size:20.00px;color:#c4c5c9;">-</span>
<span class="t" style="left:1540.50px;top:132.20px;font-size:20.00px;color:#c4c5c9;">-</span>
<span class="t" style="left:1618.30px;top:132.20px;font-size:20.00px;color:#c4c5c9;">-</span>
<span class="t" style="left:1696.40px;top:132.20px;font-size:20.00px;color:#c4c5c9;">-</span>
<span class="t" style="left:1759.00px;top:132.20px;font-size:20.00px;color:#c4c5c9;">-</span>
<svg class="b" style="left:1792.6px;top:130.5px;" width="31.5" height="22" viewBox="0 -1 31.5 22"><path fill="#d9d9db" d="M0.39,20.09 L0.31,19.50 L0.25,18.90 L0.21,18.30 L0.20,17.70 L0.21,17.10 L0.25,16.50 L0.31,15.90 L0.39,15.31 L1.87,15.54 L1.78,16.08 L1.72,16.62 L1.67,17.16 L1.65,17.70 L1.65,18.24 L1.67,18.79 L1.71,19.33 L1.77,19.87Z M0.65,14.00 L0.90,13.13 L1.19,12.28 L1.54,11.45 L1.93,10.64 L2.37,9.85 L2.85,9.09 L3.38,8.36 L3.95,7.66 L5.61,9.11 L5.07,9.66 L4.55,10.24 L4.06,10.86 L3.61,11.51 L3.20,12.19 L2.83,12.90 L2.50,13.63 L2.21,14.39Z M4.87,6.69 L5.61,6.02 L6.40,5.40 L7.22,4.83 L8.08,4.32 L8.97,3.86 L9.89,3.46 L10.84,3.13 L11.80,2.85 L12.65,6.25 L11.86,6.34 L11.08,6.49 L10.31,6.69 L9.54,6.94 L8.78,7.25 L8.03,7.61 L7.31,8.03 L6.61,8.49Z M12.84,2.63 L13.04,2.60 L13.24,2.57 L13.44,2.54 L13.64,2.51 L13.83,2.49 L14.03,2.47 L14.23,2.45 L14.43,2.44 L14.69,6.13 L14.54,6.13 L14.39,6.13 L14.23,6.13 L14.08,6.14 L13.93,6.14 L13.77,6.15 L13.62,6.16 L13.47,6.18Z M21.48,3.62 L21.84,3.78 L22.21,3.95 L22.56,4.13 L22.92,4.32 L23.27,4.52 L23.61,4.72 L23.94,4.94 L24.28,5.17 L21.52,9.10 L21.33,8.89 L21.13,8.69 L20.92,8.49 L20.71,8.30 L20.49,8.11 L20.27,7.93 L20.04,7.75 L19.80,7.57Z M25.02,5.73 L25.80,6.39 L26.53,7.10 L27.21,7.85 L27.84,8.65 L28.41,9.49 L28.93,10.37 L29.39,11.28 L29.78,12.22 L24.37,14.30 L24.21,13.67 L24.01,13.05 L23.77,12.44 L23.48,11.85 L23.15,11.26 L22.78,10.70 L22.37,10.16 L21.91,9.64Z M30.13,13.23 L30.36,14.06 L30.54,14.91 L30.68,15.77 L30.76,16.63 L30.80,17.50 L30.79,18.37 L30.72,19.23 L30.61,20.09 L24.39,19.11 L24.49,18.61 L24.57,18.10 L24.61,17.58 L24.63,17.06 L24.61,16.54 L24.57,16.02 L24.50,15.50 L24.39,14.98Z "/><path fill="#d9d9db" stroke="#343840" stroke-width="1.5" stroke-linejoin="round" style="paint-order:stroke" d="M19.9,-0.3 L15.75,18.0 A2.45,2.45 0 1 1 11.15,16.5 Z"/><circle cx="13.4" cy="17.4" r="0.95" fill="#343840"/></svg>
<div class="b" style="left:41px;top:177px;width:1800px;height:63.5px;background:#343840;"></div>
<span class="t" style="left:53.60px;top:188.01px;font-size:20.00px;color:#d8d8da;letter-spacing:0.025px;">GPU 2</span>
<span class="t" style="left:53.60px;top:215.61px;font-size:17.60px;color:#858a94;letter-spacing:0.225px;">07:00.0</span>
<span class="t" style="left:136.60px;top:188.01px;font-size:20.00px;color:#c94aab;letter-spacing:0.227px;">Radeon RX 570</span>
<span class="t" style="left:288.50px;top:191.01px;font-size:17.60px;color:#9094a0;letter-spacing:0.362px;">8192M · Sapphire</span>
<span class="t" style="left:136.60px;top:214.01px;font-size:17.60px;color:#9094a0;letter-spacing:0.280px;">Micron MT51J256M32 113-5E353BU-O6G</span>
<span class="t" style="left:758.30px;top:198.01px;font-size:20.40px;color:#dcdcde;letter-spacing:0.400px;">31.06</span>
<span class="t" style="left:817.40px;top:204.00px;font-size:13.00px;color:#dcdcde;letter-spacing:0.950px;">MH</span>
<svg class="b" style="left:870px;top:177px" width="270" height="63" viewBox="870 707 270 63"><polygon points="879.6,755.5 879.6,729.6 880.6,730.3 881.6,730.0 882.6,730.2 883.6,731.4 884.6,731.4 885.6,731.3 886.6,732.1 887.6,731.7 888.6,732.2 889.6,732.7 890.6,732.6 891.6,732.4 891.6,731.4 892.6,730.6 893.6,730.6 894.6,730.4 895.6,730.7 896.6,730.5 897.6,730.6 898.6,730.2 899.6,730.0 900.6,730.4 901.6,730.5 902.6,730.4 903.6,730.4 904.6,730.4 905.6,730.4 906.6,730.0 907.6,730.2 908.6,730.1 909.6,729.9 910.6,729.9 911.6,730.0 912.6,730.0 913.6,730.3 914.2,735.5 915.2,735.5 915.4,731.2 916.6,731.1 917.6,730.8 918.6,731.1 919.6,731.1 920.6,731.1 921.6,730.7 922.6,730.6 923.6,730.6 924.6,730.6 925.6,730.6 926.6,730.9 927.6,731.1 928.6,731.0 929.6,730.8 930.6,730.9 931.6,731.0 932.6,730.5 933.6,730.9 934.6,731.1 935.6,731.0 936.6,731.0 937.6,730.8 938.6,730.6 939.6,731.0 940.6,730.7 941.6,731.0 942.6,731.1 943.6,730.7 944.6,732.0 945.6,731.8 946.6,732.4 947.6,732.2 948.6,731.5 949.6,731.5 950.6,731.5 951.6,732.4 952.6,732.3 953.6,731.5 954.6,732.3 955.6,732.5 956.6,732.1 957.6,731.7 957.6,755.5" fill="url(#gt)"/><polyline points="879.6,729.6 880.6,730.3 881.6,730.0 882.6,730.2 883.6,731.4 884.6,731.4 885.6,731.3 886.6,732.1 887.6,731.7 888.6,732.2 889.6,732.7 890.6,732.6 891.6,732.4 891.6,731.4 892.6,730.6 893.6,730.6 894.6,730.4 895.6,730.7 896.6,730.5 897.6,730.6 898.6,730.2 899.6,730.0 900.6,730.4 901.6,730.5 902.6,730.4 903.6,730.4 904.6,730.4 905.6,730.4 906.6,730.0 907.6,730.2 908.6,730.1 909.6,729.9 910.6,729.9 911.6,730.0 912.6,730.0 913.6,730.3 914.2,735.5 915.2,735.5 915.4,731.2 916.6,731.1 917.6,730.8 918.6,731.1 919.6,731.1 920.6,731.1 921.6,730.7 922.6,730.6 923.6,730.6 924.6,730.6 925.6,730.6 926.6,730.9 927.6,731.1 928.6,731.0 929.6,730.8 930.6,730.9 931.6,731.0 932.6,730.5 933.6,730.9 934.6,731.1 935.6,731.0 936.6,731.0 937.6,730.8 938.6,730.6 939.6,731.0 940.6,730.7 941.6,731.0 942.6,731.1 943.6,730.7 944.6,732.0 945.6,731.8 946.6,732.4 947.6,732.2 948.6,731.5 949.6,731.5 950.6,731.5 951.6,732.4 952.6,732.3 953.6,731.5 954.6,732.3 955.6,732.5 956.6,732.1 957.6,731.7" fill="none" stroke="#2b9fe9" stroke-width="1.9" stroke-linejoin="round"/><path d="M881.8000000000001,727.0 V755.5" stroke="#343840" stroke-width="0.9" opacity="0.75"/><path d="M925.4,727.0 V755.5" stroke="#343840" stroke-width="0.9" opacity="0.75"/><path d="M943.9,727.0 V755.5" stroke="#343840" stroke-width="0.9" opacity="0.75"/><path d="M947.3000000000001,727.0 V755.5" stroke="#343840" stroke-width="0.9" opacity="0.75"/><polygon points="1047.6,755.5 1047.6,746.4 1051.6,746.4 1051.6,740.0 1059.6,740.0 1059.6,737.0 1063.6,737.0 1063.6,731.3 1082.6,731.3 1082.6,728.8 1083.6,728.8 1083.6,738.5 1090.6,738.5 1090.6,731.3 1112.6,731.3 1112.6,740.0 1125.6,740.0 1125.6,755.5" fill="url(#gf)"/><polyline points="1047.6,746.4 1051.6,746.4 1051.6,740.0 1059.6,740.0 1059.6,737.0 1063.6,737.0 1063.6,731.3 1082.6,731.3 1082.6,728.8 1083.6,728.8 1083.6,738.5 1090.6,738.5 1090.6,731.3 1112.6,731.3 1112.6,740.0 1125.6,740.0" fill="none" stroke="#7278f0" stroke-width="1.7"/><path d="M1049.8,735.0 V755.5" stroke="#343840" stroke-width="0.9" opacity="0.75"/><path d="M1093.3999999999999,735.0 V755.5" stroke="#343840" stroke-width="0.9" opacity="0.75"/><path d="M1111.8999999999999,735.0 V755.5" stroke="#343840" stroke-width="0.9" opacity="0.75"/><path d="M1115.3,735.0 V755.5" stroke="#343840" stroke-width="0.9" opacity="0.75"/></svg>
<span class="t" style="left:974.10px;top:198.01px;font-size:20.40px;color:#dcdcde;letter-spacing:0.712px;">57°</span>
<span class="t" style="left:1134.10px;top:198.01px;font-size:20.40px;color:#dcdcde;letter-spacing:-0.287px;">41%</span>
<svg class="b" style="left:1221.3px;top:199.2px" width="9.7" height="19.1" viewBox="0 0 9.6 20.6" preserveAspectRatio="none"><polygon points="2.1,0.5 6.3,0.3 5.5,5.5 9.3,4.4 2.5,20.3 4.4,9.4 0.2,10.3" fill="#8a8e98"/></svg>
<span class="t" style="left:1241.70px;top:198.01px;font-size:20.40px;color:#7f838c;letter-spacing:-0.450px;">90</span>
<span class="t" style="left:1270.72px;top:200.01px;font-size:18.13px;color:#7f838c;">w</span>
<span class="t" style="left:1339.30px;top:198.01px;font-size:20.00px;color:#c4c5c9;">-</span>
<span class="t" style="left:1411.70px;top:198.01px;font-size:20.00px;color:#c4c5c9;">-</span>
<span class="t" style="left:1471.70px;top:198.01px;font-size:20.00px;color:#c4c5c9;">-</span>
<span class="t" style="left:1540.50px;top:198.01px;font-size:20.00px;color:#c4c5c9;">-</span>
<span class="t" style="left:1618.30px;top:198.01px;font-size:20.00px;color:#c4c5c9;">-</span>
<span class="t" style="left:1696.40px;top:198.01px;font-size:20.00px;color:#c4c5c9;">-</span>
<span class="t" style="left:1759.00px;top:198.01px;font-size:20.00px;color:#c4c5c9;">-</span>
<svg class="b" style="left:1792.6px;top:196px;" width="31.5" height="22" viewBox="0 -1 31.5 22"><path fill="#d9d9db" d="M0.39,20.09 L0.31,19.50 L0.25,18.90 L0.21,18.30 L0.20,17.70 L0.21,17.10 L0.25,16.50 L0.31,15.90 L0.39,15.31 L1.87,15.54 L1.78,16.08 L1.72,16.62 L1.67,17.16 L1.65,17.70 L1.65,18.24 L1.67,18.79 L1.71,19.33 L1.77,19.87Z M0.65,14.00 L0.90,13.13 L1.19,12.28 L1.54,11.45 L1.93,10.64 L2.37,9.85 L2.85,9.09 L3.38,8.36 L3.95,7.66 L5.61,9.11 L5.07,9.66 L4.55,10.24 L4.06,10.86 L3.61,11.51 L3.20,12.19 L2.83,12.90 L2.50,13.63 L2.21,14.39Z M4.87,6.69 L5.61,6.02 L6.40,5.40 L7.22,4.83 L8.08,4.32 L8.97,3.86 L9.89,3.46 L10.84,3.13 L11.80,2.85 L12.65,6.25 L11.86,6.34 L11.08,6.49 L10.31,6.69 L9.54,6.94 L8.78,7.25 L8.03,7.61 L7.31,8.03 L6.61,8.49Z M12.84,2.63 L13.04,2.60 L13.24,2.57 L13.44,2.54 L13.64,2.51 L13.83,2.49 L14.03,2.47 L14.23,2.45 L14.43,2.44 L14.69,6.13 L14.54,6.13 L14.39,6.13 L14.23,6.13 L14.08,6.14 L13.93,6.14 L13.77,6.15 L13.62,6.16 L13.47,6.18Z M21.48,3.62 L21.84,3.78 L22.21,3.95 L22.56,4.13 L22.92,4.32 L23.27,4.52 L23.61,4.72 L23.94,4.94 L24.28,5.17 L21.52,9.10 L21.33,8.89 L21.13,8.69 L20.92,8.49 L20.71,8.30 L20.49,8.11 L20.27,7.93 L20.04,7.75 L19.80,7.57Z M25.02,5.73 L25.80,6.39 L26.53,7.10 L27.21,7.85 L27.84,8.65 L28.41,9.49 L28.93,10.37 L29.39,11.28 L29.78,12.22 L24.37,14.30 L24.21,13.67 L24.01,13.05 L23.77,12.44 L23.48,11.85 L23.15,11.26 L22.78,10.70 L22.37,10.16 L21.91,9.64Z M30.13,13.23 L30.36,14.06 L30.54,14.91 L30.68,15.77 L30.76,16.63 L30.80,17.50 L30.79,18.37 L30.72,19.23 L30.61,20.09 L24.39,19.11 L24.49,18.61 L24.57,18.10 L24.61,17.58 L24.63,17.06 L24.61,16.54 L24.57,16.02 L24.50,15.50 L24.39,14.98Z "/><path fill="#d9d9db" stroke="#343840" stroke-width="1.5" stroke-linejoin="round" style="paint-order:stroke" d="M19.9,-0.3 L15.75,18.0 A2.45,2.45 0 1 1 11.15,16.5 Z"/><circle cx="13.4" cy="17.4" r="0.95" fill="#343840"/></svg>
<div class="b" style="left:41px;top:242.5px;width:1800px;height:63.5px;background:#343840;"></div>
<span class="t" style="left:53.60px;top:253.20px;font-size:20.00px;color:#d8d8da;letter-spacing:0.025px;">GPU 3</span>
<span class="t" style="left:53.60px;top:280.81px;font-size:17.60px;color:#858a94;letter-spacing:0.225px;">08:00.0</span>
<span class="t" style="left:136.60px;top:253.20px;font-size:20.00px;color:#c94aab;letter-spacing:0.227px;">Radeon RX 570</span>
<span class="t" style="left:288.50px;top:256.20px;font-size:17.60px;color:#9094a0;letter-spacing:0.362px;">8192M · Sapphire</span>
<span class="t" style="left:136.60px;top:279.20px;font-size:17.60px;color:#9094a0;letter-spacing:0.087px;">Samsung K4G80325FB 113-2E366AU-X4Z</span>
<span class="t" style="left:758.30px;top:263.21px;font-size:20.40px;color:#dcdcde;letter-spacing:0.400px;">29.49</span>
<span class="t" style="left:817.40px;top:269.21px;font-size:13.00px;color:#dcdcde;letter-spacing:0.950px;">MH</span>
<svg class="b" style="left:870px;top:242.5px" width="270" height="63" viewBox="870 772.5 270 63"><polygon points="879.6,821.0 879.6,795.5 880.6,796.4 881.6,796.8 882.6,797.6 883.6,799.4 884.6,799.9 885.6,800.6 886.6,801.9 887.6,801.8 888.6,802.3 889.6,802.2 890.6,801.6 891.6,801.7 891.6,796.9 892.6,796.1 893.6,796.0 894.6,796.2 895.6,795.9 896.6,795.9 897.6,795.6 898.6,796.1 899.6,795.6 900.6,795.7 901.6,795.8 902.6,796.0 903.6,795.6 904.6,796.0 905.6,795.7 906.6,795.7 907.6,795.7 908.6,795.4 909.6,795.7 910.6,795.5 911.6,795.4 912.6,795.9 913.6,795.5 914.2,805.0 915.2,805.0 915.4,796.7 916.6,796.3 917.6,796.5 918.6,796.3 919.6,796.2 920.6,796.3 921.6,796.3 922.6,796.5 923.6,796.0 924.6,796.3 925.6,796.1 926.6,796.1 927.6,796.5 928.6,796.3 929.6,796.3 930.6,796.5 931.6,796.6 932.6,796.3 933.6,796.4 934.6,796.3 935.6,796.3 936.6,796.4 937.6,796.3 938.6,796.3 939.6,796.3 940.6,796.6 941.6,796.4 942.6,796.6 943.6,796.6 944.6,800.5 945.6,800.1 946.6,800.5 947.6,800.9 948.6,800.8 949.6,800.0 950.6,799.9 951.6,800.3 952.6,799.9 953.6,800.1 954.6,799.9 955.6,800.6 956.6,800.7 957.6,800.9 957.6,821.0" fill="url(#gt)"/><polyline points="879.6,795.5 880.6,796.4 881.6,796.8 882.6,797.6 883.6,799.4 884.6,799.9 885.6,800.6 886.6,801.9 887.6,801.8 888.6,802.3 889.6,802.2 890.6,801.6 891.6,801.7 891.6,796.9 892.6,796.1 893.6,796.0 894.6,796.2 895.6,795.9 896.6,795.9 897.6,795.6 898.6,796.1 899.6,795.6 900.6,795.7 901.6,795.8 902.6,796.0 903.6,795.6 904.6,796.0 905.6,795.7 906.6,795.7 907.6,795.7 908.6,795.4 909.6,795.7 910.6,795.5 911.6,795.4 912.6,795.9 913.6,795.5 914.2,805.0 915.2,805.0 915.4,796.7 916.6,796.3 917.6,796.5 918.6,796.3 919.6,796.2 920.6,796.3 921.6,796.3 922.6,796.5 923.6,796.0 924.6,796.3 925.6,796.1 926.6,796.1 927.6,796.5 928.6,796.3 929.6,796.3 930.6,796.5 931.6,796.6 932.6,796.3 933.6,796.4 934.6,796.3 935.6,796.3 936.6,796.4 937.6,796.3 938.6,796.3 939.6,796.3 940.6,796.6 941.6,796.4 942.6,796.6 943.6,796.6 944.6,800.5 945.6,800.1 946.6,800.5 947.6,800.9 948.6,800.8 949.6,800.0 950.6,799.9 951.6,800.3 952.6,799.9 953.6,800.1 954.6,799.9 955.6,800.6 956.6,800.7 957.6,800.9" fill="none" stroke="#2b9fe9" stroke-width="1.9" stroke-linejoin="round"/><path d="M881.8000000000001,792.5 V821.0" stroke="#343840" stroke-width="0.9" opacity="0.75"/><path d="M925.4,792.5 V821.0" stroke="#343840" stroke-width="0.9" opacity="0.75"/><path d="M943.9,792.5 V821.0" stroke="#343840" stroke-width="0.9" opacity="0.75"/><path d="M947.3000000000001,792.5 V821.0" stroke="#343840" stroke-width="0.9" opacity="0.75"/><polygon points="1047.6,821.0 1047.6,809.5 1051.6,809.5 1051.6,802.8 1060.6,802.8 1060.6,799.4 1082.6,799.4 1082.6,802.8 1087.6,802.8 1087.6,799.4 1112.6,799.4 1112.6,801.9 1122.6,801.9 1122.6,799.5 1125.6,799.5 1125.6,821.0" fill="url(#gf)"/><polyline points="1047.6,809.5 1051.6,809.5 1051.6,802.8 1060.6,802.8 1060.6,799.4 1082.6,799.4 1082.6,802.8 1087.6,802.8 1087.6,799.4 1112.6,799.4 1112.6,801.9 1122.6,801.9 1122.6,799.5 1125.6,799.5" fill="none" stroke="#7278f0" stroke-width="1.7"/><path d="M1049.8,800.5 V821.0" stroke="#343840" stroke-width="0.9" opacity="0.75"/><path d="M1093.3999999999999,800.5 V821.0" stroke="#343840" stroke-width="0.9" opacity="0.75"/><path d="M1111.8999999999999,800.5 V821.0" stroke="#343840" stroke-width="0.9" opacity="0.75"/><path d="M1115.3,800.5 V821.0" stroke="#343840" stroke-width="0.9" opacity="0.75"/></svg>
<span class="t" style="left:974.10px;top:263.21px;font-size:20.40px;color:#dcdcde;letter-spacing:0.712px;">50°</span>
<span class="t" style="left:1134.10px;top:263.21px;font-size:20.40px;color:#dcdcde;letter-spacing:-0.287px;">40%</span>
<svg class="b" style="left:1221.3px;top:264.7px" width="9.7" height="19.1" viewBox="0 0 9.6 20.6" preserveAspectRatio="none"><polygon points="2.1,0.5 6.3,0.3 5.5,5.5 9.3,4.4 2.5,20.3 4.4,9.4 0.2,10.3" fill="#8a8e98"/></svg>
<span class="t" style="left:1241.70px;top:263.21px;font-size:20.40px;color:#7f838c;letter-spacing:-0.450px;">93</span>
<span class="t" style="left:1270.72px;top:265.21px;font-size:18.13px;color:#7f838c;">w</span>
<span class="t" style="left:1339.30px;top:263.20px;font-size:20.00px;color:#c4c5c9;">-</span>
<span class="t" style="left:1411.70px;top:263.20px;font-size:20.00px;color:#c4c5c9;">-</span>
<span class="t" style="left:1471.70px;top:263.20px;font-size:20.00px;color:#c4c5c9;">-</span>
<span class="t" style="left:1540.50px;top:263.20px;font-size:20.00px;color:#c4c5c9;">-</span>
<span class="t" style="left:1618.30px;top:263.20px;font-size:20.00px;color:#c4c5c9;">-</span>
<span class="t" style="left:1696.40px;top:263.20px;font-size:20.00px;color:#c4c5c9;">-</span>
<span class="t" style="left:1759.00px;top:263.20px;font-size:20.00px;color:#c4c5c9;">-</span>
<svg class="b" style="left:1792.6px;top:261.5px;" width="31.5" height="22" viewBox="0 -1 31.5 22"><path fill="#d9d9db" d="M0.39,20.09 L0.31,19.50 L0.25,18.90 L0.21,18.30 L0.20,17.70 L0.21,17.10 L0.25,16.50 L0.31,15.90 L0.39,15.31 L1.87,15.54 L1.78,16.08 L1.72,16.62 L1.67,17.16 L1.65,17.70 L1.65,18.24 L1.67,18.79 L1.71,19.33 L1.77,19.87Z M0.65,14.00 L0.90,13.13 L1.19,12.28 L1.54,11.45 L1.93,10.64 L2.37,9.85 L2.85,9.09 L3.38,8.36 L3.95,7.66 L5.61,9.11 L5.07,9.66 L4.55,10.24 L4.06,10.86 L3.61,11.51 L3.20,12.19 L2.83,12.90 L2.50,13.63 L2.21,14.39Z M4.87,6.69 L5.61,6.02 L6.40,5.40 L7.22,4.83 L8.08,4.32 L8.97,3.86 L9.89,3.46 L10.84,3.13 L11.80,2.85 L12.65,6.25 L11.86,6.34 L11.08,6.49 L10.31,6.69 L9.54,6.94 L8.78,7.25 L8.03,7.61 L7.31,8.03 L6.61,8.49Z M12.84,2.63 L13.04,2.60 L13.24,2.57 L13.44,2.54 L13.64,2.51 L13.83,2.49 L14.03,2.47 L14.23,2.45 L14.43,2.44 L14.69,6.13 L14.54,6.13 L14.39,6.13 L14.23,6.13 L14.08,6.14 L13.93,6.14 L13.77,6.15 L13.62,6.16 L13.47,6.18Z M21.48,3.62 L21.84,3.78 L22.21,3.95 L22.56,4.13 L22.92,4.32 L23.27,4.52 L23.61,4.72 L23.94,4.94 L24.28,5.17 L21.52,9.10 L21.33,8.89 L21.13,8.69 L20.92,8.49 L20.71,8.30 L20.49,8.11 L20.27,7.93 L20.04,7.75 L19.80,7.57Z M25.02,5.73 L25.80,6.39 L26.53,7.10 L27.21,7.85 L27.84,8.65 L28.41,9.49 L28.93,10.37 L29.39,11.28 L29.78,12.22 L24.37,14.30 L24.21,13.67 L24.01,13.05 L23.77,12.44 L23.48,11.85 L23.15,11.26 L22.78,10.70 L22.37,10.16 L21.91,9.64Z M30.13,13.23 L30.36,14.06 L30.54,14.91 L30.68,15.77 L30.76,16.63 L30.80,17.50 L30.79,18.37 L30.72,19.23 L30.61,20.09 L24.39,19.11 L24.49,18.61 L24.57,18.10 L24.61,17.58 L24.63,17.06 L24.61,16.54 L24.57,16.02 L24.50,15.50 L24.39,14.98Z "/><path fill="#d9d9db" stroke="#343840" stroke-width="1.5" stroke-linejoin="round" style="paint-order:stroke" d="M19.9,-0.3 L15.75,18.0 A2.45,2.45 0 1 1 11.15,16.5 Z"/><circle cx="13.4" cy="17.4" r="0.95" fill="#343840"/></svg>
<div class="b" style="left:41px;top:308px;width:1800px;height:63.5px;background:#343840;"></div>
<span class="t" style="left:53.60px;top:319.01px;font-size:20.00px;color:#d8d8da;letter-spacing:0.025px;">GPU 4</span>
<span class="t" style="left:53.60px;top:346.61px;font-size:17.60px;color:#858a94;letter-spacing:0.225px;">0a:00.0</span>
<span class="t" style="left:136.60px;top:319.01px;font-size:20.00px;color:#c94aab;letter-spacing:0.227px;">Radeon RX 570</span>
<span class="t" style="left:288.50px;top:322.01px;font-size:17.60px;color:#9094a0;letter-spacing:0.362px;">8192M · Sapphire</span>
<span class="t" style="left:136.60px;top:345.01px;font-size:17.60px;color:#9094a0;letter-spacing:0.280px;">Micron MT51J256M32 113-5E353BU-O6G</span>
<span class="t" style="left:758.30px;top:329.01px;font-size:20.40px;color:#dcdcde;letter-spacing:0.400px;">31.08</span>
<span class="t" style="left:817.40px;top:335.00px;font-size:13.00px;color:#dcdcde;letter-spacing:0.950px;">MH</span>
<svg class="b" style="left:870px;top:308px" width="270" height="63" viewBox="870 838 270 63"><polygon points="879.6,886.5 879.6,861.6 880.6,861.8 881.6,862.8 882.6,863.3 883.6,863.3 884.6,864.5 885.6,865.1 886.6,864.9 887.6,865.9 888.6,865.3 889.6,865.4 890.6,865.9 891.6,865.7 891.6,861.9 892.6,861.0 893.6,861.1 894.6,861.1 895.6,860.9 896.6,860.7 897.6,860.7 898.6,860.9 899.6,860.4 900.6,860.7 901.6,860.7 902.6,860.4 903.6,860.6 904.6,860.8 905.6,860.7 906.6,860.4 907.6,861.0 908.6,860.9 909.6,861.0 910.6,860.4 911.6,860.5 912.6,860.4 913.6,860.9 914.2,868.5 915.2,868.5 915.4,861.7 916.6,861.1 917.6,861.0 918.6,861.2 919.6,861.6 920.6,861.5 921.6,861.1 922.6,861.1 923.6,861.6 924.6,861.3 925.6,861.4 926.6,861.0 927.6,861.0 928.6,861.4 929.6,861.2 930.6,861.0 931.6,861.6 932.6,861.4 933.6,861.5 934.6,861.0 935.6,861.5 936.6,861.0 937.6,861.6 938.6,861.3 939.6,861.2 940.6,861.3 941.6,861.6 942.6,861.1 943.6,861.0 944.6,864.4 945.6,864.3 946.6,864.0 947.6,863.8 948.6,863.9 949.6,863.8 950.6,863.9 951.6,864.1 952.6,864.1 953.6,864.6 954.6,864.0 955.6,864.3 956.6,863.9 957.6,864.1 957.6,886.5" fill="url(#gt)"/><polyline points="879.6,861.6 880.6,861.8 881.6,862.8 882.6,863.3 883.6,863.3 884.6,864.5 885.6,865.1 886.6,864.9 887.6,865.9 888.6,865.3 889.6,865.4 890.6,865.9 891.6,865.7 891.6,861.9 892.6,861.0 893.6,861.1 894.6,861.1 895.6,860.9 896.6,860.7 897.6,860.7 898.6,860.9 899.6,860.4 900.6,860.7 901.6,860.7 902.6,860.4 903.6,860.6 904.6,860.8 905.6,860.7 906.6,860.4 907.6,861.0 908.6,860.9 909.6,861.0 910.6,860.4 911.6,860.5 912.6,860.4 913.6,860.9 914.2,868.5 915.2,868.5 915.4,861.7 916.6,861.1 917.6,861.0 918.6,861.2 919.6,861.6 920.6,861.5 921.6,861.1 922.6,861.1 923.6,861.6 924.6,861.3 925.6,861.4 926.6,861.0 927.6,861.0 928.6,861.4 929.6,861.2 930.6,861.0 931.6,861.6 932.6,861.4 933.6,861.5 934.6,861.0 935.6,861.5 936.6,861.0 937.6,861.6 938.6,861.3 939.6,861.2 940.6,861.3 941.6,861.6 942.6,861.1 943.6,861.0 944.6,864.4 945.6,864.3 946.6,864.0 947.6,863.8 948.6,863.9 949.6,863.8 950.6,863.9 951.6,864.1 952.6,864.1 953.6,864.6 954.6,864.0 955.6,864.3 956.6,863.9 957.6,864.1" fill="none" stroke="#2b9fe9" stroke-width="1.9" stroke-linejoin="round"/><path d="M881.8000000000001,858.0 V886.5" stroke="#343840" stroke-width="0.9" opacity="0.75"/><path d="M925.4,858.0 V886.5" stroke="#343840" stroke-width="0.9" opacity="0.75"/><path d="M943.9,858.0 V886.5" stroke="#343840" stroke-width="0.9" opacity="0.75"/><path d="M947.3000000000001,858.0 V886.5" stroke="#343840" stroke-width="0.9" opacity="0.75"/><polygon points="1047.6,886.5 1047.6,874.5 1051.6,874.5 1051.6,866.6 1057.6,866.6 1057.6,865.0 1064.6,865.0 1064.6,863.0 1069.6,863.0 1069.6,861.5 1073.6,861.5 1073.6,853.2 1082.6,853.2 1082.6,864.1 1095.6,864.1 1095.6,862.6 1103.6,862.6 1103.6,863.6 1112.6,863.6 1112.6,867.4 1122.6,867.4 1122.6,864.6 1125.6,864.6 1125.6,886.5" fill="url(#gf)"/><polyline points="1047.6,874.5 1051.6,874.5 1051.6,866.6 1057.6,866.6 1057.6,865.0 1064.6,865.0 1064.6,863.0 1069.6,863.0 1069.6,861.5 1073.6,861.5 1073.6,853.2 1082.6,853.2 1082.6,864.1 1095.6,864.1 1095.6,862.6 1103.6,862.6 1103.6,863.6 1112.6,863.6 1112.6,867.4 1122.6,867.4 1122.6,864.6 1125.6,864.6" fill="none" stroke="#7278f0" stroke-width="1.7"/><path d="M1049.8,866.0 V886.5" stroke="#343840" stroke-width="0.9" opacity="0.75"/><path d="M1093.3999999999999,866.0 V886.5" stroke="#343840" stroke-width="0.9" opacity="0.75"/><path d="M1111.8999999999999,866.0 V886.5" stroke="#343840" stroke-width="0.9" opacity="0.75"/><path d="M1115.3,866.0 V886.5" stroke="#343840" stroke-width="0.9" opacity="0.75"/></svg>
<span class="t" style="left:974.10px;top:329.01px;font-size:20.40px;color:#dcdcde;letter-spacing:0.712px;">52°</span>
<span class="t" style="left:1134.10px;top:329.01px;font-size:20.40px;color:#dcdcde;letter-spacing:-0.287px;">41%</span>
<svg class="b" style="left:1221.3px;top:330.2px" width="9.7" height="19.1" viewBox="0 0 9.6 20.6" preserveAspectRatio="none"><polygon points="2.1,0.5 6.3,0.3 5.5,5.5 9.3,4.4 2.5,20.3 4.4,9.4 0.2,10.3" fill="#8a8e98"/></svg>
<span class="t" style="left:1241.70px;top:329.01px;font-size:20.40px;color:#7f838c;letter-spacing:-0.450px;">91</span>
<span class="t" style="left:1270.72px;top:331.01px;font-size:18.13px;color:#7f838c;">w</span>
<span class="t" style="left:1339.30px;top:329.01px;font-size:20.00px;color:#c4c5c9;">-</span>
<span class="t" style="left:1411.70px;top:329.01px;font-size:20.00px;color:#c4c5c9;">-</span>
<span class="t" style="left:1471.70px;top:329.01px;font-size:20.00px;color:#c4c5c9;">-</span>
<span class="t" style="left:1540.50px;top:329.01px;font-size:20.00px;color:#c4c5c9;">-</span>
<span class="t" style="left:1618.30px;top:329.01px;font-size:20.00px;color:#c4c5c9;">-</span>
<span class="t" style="left:1696.40px;top:329.01px;font-size:20.00px;color:#c4c5c9;">-</span>
<span class="t" style="left:1759.00px;top:329.01px;font-size:20.00px;color:#c4c5c9;">-</span>
<svg class="b" style="left:1792.6px;top:327px;" width="31.5" height="22" viewBox="0 -1 31.5 22"><path fill="#d9d9db" d="M0.39,20.09 L0.31,19.50 L0.25,18.90 L0.21,18.30 L0.20,17.70 L0.21,17.10 L0.25,16.50 L0.31,15.90 L0.39,15.31 L1.87,15.54 L1.78,16.08 L1.72,16.62 L1.67,17.16 L1.65,17.70 L1.65,18.24 L1.67,18.79 L1.71,19.33 L1.77,19.87Z M0.65,14.00 L0.90,13.13 L1.19,12.28 L1.54,11.45 L1.93,10.64 L2.37,9.85 L2.85,9.09 L3.38,8.36 L3.95,7.66 L5.61,9.11 L5.07,9.66 L4.55,10.24 L4.06,10.86 L3.61,11.51 L3.20,12.19 L2.83,12.90 L2.50,13.63 L2.21,14.39Z M4.87,6.69 L5.61,6.02 L6.40,5.40 L7.22,4.83 L8.08,4.32 L8.97,3.86 L9.89,3.46 L10.84,3.13 L11.80,2.85 L12.65,6.25 L11.86,6.34 L11.08,6.49 L10.31,6.69 L9.54,6.94 L8.78,7.25 L8.03,7.61 L7.31,8.03 L6.61,8.49Z M12.84,2.63 L13.04,2.60 L13.24,2.57 L13.44,2.54 L13.64,2.51 L13.83,2.49 L14.03,2.47 L14.23,2.45 L14.43,2.44 L14.69,6.13 L14.54,6.13 L14.39,6.13 L14.23,6.13 L14.08,6.14 L13.93,6.14 L13.77,6.15 L13.62,6.16 L13.47,6.18Z M21.48,3.62 L21.84,3.78 L22.21,3.95 L22.56,4.13 L22.92,4.32 L23.27,4.52 L23.61,4.72 L23.94,4.94 L24.28,5.17 L21.52,9.10 L21.33,8.89 L21.13,8.69 L20.92,8.49 L20.71,8.30 L20.49,8.11 L20.27,7.93 L20.04,7.75 L19.80,7.57Z M25.02,5.73 L25.80,6.39 L26.53,7.10 L27.21,7.85 L27.84,8.65 L28.41,9.49 L28.93,10.37 L29.39,11.28 L29.78,12.22 L24.37,14.30 L24.21,13.67 L24.01,13.05 L23.77,12.44 L23.48,11.85 L23.15,11.26 L22.78,10.70 L22.37,10.16 L21.91,9.64Z M30.13,13.23 L30.36,14.06 L30.54,14.91 L30.68,15.77 L30.76,16.63 L30.80,17.50 L30.79,18.37 L30.72,19.23 L30.61,20.09 L24.39,19.11 L24.49,18.61 L24.57,18.10 L24.61,17.58 L24.63,17.06 L24.61,16.54 L24.57,16.02 L24.50,15.50 L24.39,14.98Z "/><path fill="#d9d9db" stroke="#343840" stroke-width="1.5" stroke-linejoin="round" style="paint-order:stroke" d="M19.9,-0.3 L15.75,18.0 A2.45,2.45 0 1 1 11.15,16.5 Z"/><circle cx="13.4" cy="17.4" r="0.95" fill="#343840"/></svg>
<div class="b" style="left:41px;top:373.5px;width:1800px;height:63.5px;background:#343840;"></div>
<span class="t" style="left:53.60px;top:384.20px;font-size:20.00px;color:#d8d8da;letter-spacing:0.025px;">GPU 5</span>
<span class="t" style="left:53.60px;top:411.81px;font-size:17.60px;color:#858a94;letter-spacing:0.225px;">0b:00.0</span>
<span class="t" style="left:136.60px;top:384.20px;font-size:20.00px;color:#c94aab;letter-spacing:0.227px;">Radeon RX 570</span>
<span class="t" style="left:288.50px;top:387.20px;font-size:17.60px;color:#9094a0;letter-spacing:0.362px;">8192M · Sapphire</span>
<span class="t" style="left:136.60px;top:410.20px;font-size:17.60px;color:#9094a0;letter-spacing:0.280px;">Micron MT51J256M32 113-5E353BU-O6G</span>
<span class="t" style="left:758.30px;top:394.21px;font-size:20.40px;color:#dcdcde;letter-spacing:0.400px;">31.03</span>
<span class="t" style="left:817.40px;top:400.21px;font-size:13.00px;color:#dcdcde;letter-spacing:0.950px;">MH</span>
<svg class="b" style="left:870px;top:373.5px" width="270" height="63" viewBox="870 903.5 270 63"><polygon points="879.6,952.0 879.6,927.5 880.6,927.6 881.6,928.5 882.6,928.9 883.6,930.2 884.6,930.6 885.6,930.9 886.6,931.8 887.6,932.5 888.6,931.7 889.6,932.4 890.6,932.0 891.6,932.1 891.6,928.8 892.6,928.4 893.6,928.0 894.6,928.0 895.6,928.1 896.6,928.2 897.6,927.6 898.6,927.9 899.6,927.7 900.6,927.7 901.6,927.5 902.6,927.5 903.6,927.3 904.6,927.3 905.6,927.3 906.6,927.8 907.6,927.4 908.6,927.4 909.6,927.3 910.6,927.8 911.6,927.9 912.6,927.7 913.6,927.4 914.2,934.5 915.2,934.5 915.4,928.6 916.6,928.0 917.6,928.1 918.6,928.2 919.6,928.0 920.6,928.2 921.6,928.0 922.6,928.5 923.6,928.5 924.6,928.2 925.6,928.0 926.6,928.5 927.6,928.1 928.6,928.1 929.6,927.9 930.6,928.1 931.6,928.2 932.6,928.2 933.6,928.0 934.6,928.2 935.6,927.9 936.6,928.0 937.6,927.9 938.6,928.1 939.6,927.9 940.6,927.9 941.6,928.1 942.6,928.0 943.6,928.3 944.6,931.5 945.6,931.4 946.6,931.7 947.6,931.6 948.6,931.7 949.6,931.9 950.6,931.3 951.6,931.2 952.6,932.0 953.6,931.0 954.6,931.7 955.6,931.6 956.6,930.9 957.6,931.8 957.6,952.0" fill="url(#gt)"/><polyline points="879.6,927.5 880.6,927.6 881.6,928.5 882.6,928.9 883.6,930.2 884.6,930.6 885.6,930.9 886.6,931.8 887.6,932.5 888.6,931.7 889.6,932.4 890.6,932.0 891.6,932.1 891.6,928.8 892.6,928.4 893.6,928.0 894.6,928.0 895.6,928.1 896.6,928.2 897.6,927.6 898.6,927.9 899.6,927.7 900.6,927.7 901.6,927.5 902.6,927.5 903.6,927.3 904.6,927.3 905.6,927.3 906.6,927.8 907.6,927.4 908.6,927.4 909.6,927.3 910.6,927.8 911.6,927.9 912.6,927.7 913.6,927.4 914.2,934.5 915.2,934.5 915.4,928.6 916.6,928.0 917.6,928.1 918.6,928.2 919.6,928.0 920.6,928.2 921.6,928.0 922.6,928.5 923.6,928.5 924.6,928.2 925.6,928.0 926.6,928.5 927.6,928.1 928.6,928.1 929.6,927.9 930.6,928.1 931.6,928.2 932.6,928.2 933.6,928.0 934.6,928.2 935.6,927.9 936.6,928.0 937.6,927.9 938.6,928.1 939.6,927.9 940.6,927.9 941.6,928.1 942.6,928.0 943.6,928.3 944.6,931.5 945.6,931.4 946.6,931.7 947.6,931.6 948.6,931.7 949.6,931.9 950.6,931.3 951.6,931.2 952.6,932.0 953.6,931.0 954.6,931.7 955.6,931.6 956.6,930.9 957.6,931.8" fill="none" stroke="#2b9fe9" stroke-width="1.9" stroke-linejoin="round"/><path d="M881.8000000000001,923.5 V952.0" stroke="#343840" stroke-width="0.9" opacity="0.75"/><path d="M925.4,923.5 V952.0" stroke="#343840" stroke-width="0.9" opacity="0.75"/><path d="M943.9,923.5 V952.0" stroke="#343840" stroke-width="0.9" opacity="0.75"/><path d="M947.3000000000001,923.5 V952.0" stroke="#343840" stroke-width="0.9" opacity="0.75"/><polygon points="1047.6,952.0 1047.6,940.5 1051.6,940.5 1051.6,932.6 1060.6,932.6 1060.6,930.4 1064.6,930.4 1064.6,932.6 1075.6,932.6 1075.6,930.4 1082.6,930.4 1082.6,932.6 1092.6,932.6 1092.6,930.4 1099.6,930.4 1099.6,933.3 1122.6,933.3 1122.6,930.9 1125.6,930.9 1125.6,952.0" fill="url(#gf)"/><polyline points="1047.6,940.5 1051.6,940.5 1051.6,932.6 1060.6,932.6 1060.6,930.4 1064.6,930.4 1064.6,932.6 1075.6,932.6 1075.6,930.4 1082.6,930.4 1082.6,932.6 1092.6,932.6 1092.6,930.4 1099.6,930.4 1099.6,933.3 1122.6,933.3 1122.6,930.9 1125.6,930.9" fill="none" stroke="#7278f0" stroke-width="1.7"/><path d="M1049.8,931.5 V952.0" stroke="#343840" stroke-width="0.9" opacity="0.75"/><path d="M1093.3999999999999,931.5 V952.0" stroke="#343840" stroke-width="0.9" opacity="0.75"/><path d="M1111.8999999999999,931.5 V952.0" stroke="#343840" stroke-width="0.9" opacity="0.75"/><path d="M1115.3,931.5 V952.0" stroke="#343840" stroke-width="0.9" opacity="0.75"/></svg>
<span class="t" style="left:974.10px;top:394.21px;font-size:20.40px;color:#dcdcde;letter-spacing:0.712px;">51°</span>
<span class="t" style="left:1134.10px;top:394.21px;font-size:20.40px;color:#dcdcde;letter-spacing:-0.287px;">40%</span>
<svg class="b" style="left:1221.3px;top:395.7px" width="9.7" height="19.1" viewBox="0 0 9.6 20.6" preserveAspectRatio="none"><polygon points="2.1,0.5 6.3,0.3 5.5,5.5 9.3,4.4 2.5,20.3 4.4,9.4 0.2,10.3" fill="#8a8e98"/></svg>
<span class="t" style="left:1241.70px;top:394.21px;font-size:20.40px;color:#7f838c;letter-spacing:-0.450px;">93</span>
<span class="t" style="left:1270.72px;top:396.21px;font-size:18.13px;color:#7f838c;">w</span>
<span class="t" style="left:1339.30px;top:394.20px;font-size:20.00px;color:#c4c5c9;">-</span>
<span class="t" style="left:1411.70px;top:394.20px;font-size:20.00px;color:#c4c5c9;">-</span>
<span class="t" style="left:1471.70px;top:394.20px;font-size:20.00px;color:#c4c5c9;">-</span>
<span class="t" style="left:1540.50px;top:394.20px;font-size:20.00px;color:#c4c5c9;">-</span>
<span class="t" style="left:1618.30px;top:394.20px;font-size:20.00px;color:#c4c5c9;">-</span>
<span class="t" style="left:1696.40px;top:394.20px;font-size:20.00px;color:#c4c5c9;">-</span>
<span class="t" style="left:1759.00px;top:394.20px;font-size:20.00px;color:#c4c5c9;">-</span>
<svg class="b" style="left:1792.6px;top:392.5px;" width="31.5" height="22" viewBox="0 -1 31.5 22"><path fill="#d9d9db" d="M0.39,20.09 L0.31,19.50 L0.25,18.90 L0.21,18.30 L0.20,17.70 L0.21,17.10 L0.25,16.50 L0.31,15.90 L0.39,15.31 L1.87,15.54 L1.78,16.08 L1.72,16.62 L1.67,17.16 L1.65,17.70 L1.65,18.24 L1.67,18.79 L1.71,19.33 L1.77,19.87Z M0.65,14.00 L0.90,13.13 L1.19,12.28 L1.54,11.45 L1.93,10.64 L2.37,9.85 L2.85,9.09 L3.38,8.36 L3.95,7.66 L5.61,9.11 L5.07,9.66 L4.55,10.24 L4.06,10.86 L3.61,11.51 L3.20,12.19 L2.83,12.90 L2.50,13.63 L2.21,14.39Z M4.87,6.69 L5.61,6.02 L6.40,5.40 L7.22,4.83 L8.08,4.32 L8.97,3.86 L9.89,3.46 L10.84,3.13 L11.80,2.85 L12.65,6.25 L11.86,6.34 L11.08,6.49 L10.31,6.69 L9.54,6.94 L8.78,7.25 L8.03,7.61 L7.31,8.03 L6.61,8.49Z M12.84,2.63 L13.04,2.60 L13.24,2.57 L13.44,2.54 L13.64,2.51 L13.83,2.49 L14.03,2.47 L14.23,2.45 L14.43,2.44 L14.69,6.13 L14.54,6.13 L14.39,6.13 L14.23,6.13 L14.08,6.14 L13.93,6.14 L13.77,6.15 L13.62,6.16 L13.47,6.18Z M21.48,3.62 L21.84,3.78 L22.21,3.95 L22.56,4.13 L22.92,4.32 L23.27,4.52 L23.61,4.72 L23.94,4.94 L24.28,5.17 L21.52,9.10 L21.33,8.89 L21.13,8.69 L20.92,8.49 L20.71,8.30 L20.49,8.11 L20.27,7.93 L20.04,7.75 L19.80,7.57Z M25.02,5.73 L25.80,6.39 L26.53,7.10 L27.21,7.85 L27.84,8.65 L28.41,9.49 L28.93,10.37 L29.39,11.28 L29.78,12.22 L24.37,14.30 L24.21,13.67 L24.01,13.05 L23.77,12.44 L23.48,11.85 L23.15,11.26 L22.78,10.70 L22.37,10.16 L21.91,9.64Z M30.13,13.23 L30.36,14.06 L30.54,14.91 L30.68,15.77 L30.76,16.63 L30.80,17.50 L30.79,18.37 L30.72,19.23 L30.61,20.09 L24.39,19.11 L24.49,18.61 L24.57,18.10 L24.61,17.58 L24.63,17.06 L24.61,16.54 L24.57,16.02 L24.50,15.50 L24.39,14.98Z "/><path fill="#d9d9db" stroke="#343840" stroke-width="1.5" stroke-linejoin="round" style="paint-order:stroke" d="M19.9,-0.3 L15.75,18.0 A2.45,2.45 0 1 1 11.15,16.5 Z"/><circle cx="13.4" cy="17.4" r="0.95" fill="#343840"/></svg>
<div class="b" style="left:41px;top:439px;width:1800px;height:63.5px;background:#343840;"></div>
<span class="t" style="left:53.60px;top:450.01px;font-size:20.00px;color:#d8d8da;letter-spacing:0.025px;">GPU 6</span>
<span class="t" style="left:53.60px;top:477.61px;font-size:17.60px;color:#858a94;letter-spacing:0.392px;">0c:00.0</span>
<span class="t" style="left:136.60px;top:450.01px;font-size:20.00px;color:#c94aab;letter-spacing:0.227px;">Radeon RX 570</span>
<span class="t" style="left:288.50px;top:453.01px;font-size:17.60px;color:#9094a0;letter-spacing:0.362px;">8192M · Sapphire</span>
<span class="t" style="left:136.60px;top:476.01px;font-size:17.60px;color:#9094a0;letter-spacing:0.087px;">Samsung K4G80325FB 113-2E366AU-X4Z</span>
<span class="t" style="left:758.30px;top:460.01px;font-size:20.40px;color:#dcdcde;letter-spacing:0.400px;">29.49</span>
<span class="t" style="left:817.40px;top:466.00px;font-size:13.00px;color:#dcdcde;letter-spacing:0.950px;">MH</span>
<svg class="b" style="left:870px;top:439px" width="270" height="63" viewBox="870 969 270 63"><polygon points="879.6,1017.5 879.6,985.8 880.6,986.9 881.6,987.4 882.6,988.2 883.6,989.0 884.6,989.0 885.6,990.1 886.6,990.8 887.6,991.5 888.6,991.5 889.6,991.5 890.6,991.3 891.6,991.6 891.6,987.4 892.6,986.9 893.6,986.8 894.6,986.4 895.6,986.2 896.6,986.2 897.6,986.3 898.6,986.0 899.6,986.4 900.6,986.2 901.6,986.3 902.6,986.3 903.6,986.3 904.6,986.2 905.6,985.9 906.6,986.4 907.6,986.4 908.6,986.2 909.6,986.2 910.6,986.3 911.6,985.9 912.6,986.4 913.6,986.0 914.2,995.4 915.2,995.4 915.4,987.2 916.6,986.5 917.6,986.6 918.6,987.0 919.6,986.6 920.6,987.0 921.6,987.1 922.6,986.8 923.6,986.7 924.6,986.8 925.6,986.9 926.6,987.0 927.6,986.9 928.6,986.9 929.6,986.5 930.6,986.6 931.6,986.6 932.6,987.0 933.6,986.7 934.6,986.8 935.6,986.5 936.6,986.5 937.6,986.6 938.6,986.9 939.6,986.9 940.6,986.9 941.6,986.7 942.6,986.8 943.6,986.8 944.6,991.2 945.6,991.1 946.6,990.6 947.6,991.6 948.6,990.7 949.6,991.7 950.6,991.6 951.6,990.5 952.6,991.1 953.6,991.5 954.6,991.7 955.6,991.0 956.6,990.8 957.6,990.8 957.6,1017.5" fill="url(#gt)"/><polyline points="879.6,985.8 880.6,986.9 881.6,987.4 882.6,988.2 883.6,989.0 884.6,989.0 885.6,990.1 886.6,990.8 887.6,991.5 888.6,991.5 889.6,991.5 890.6,991.3 891.6,991.6 891.6,987.4 892.6,986.9 893.6,986.8 894.6,986.4 895.6,986.2 896.6,986.2 897.6,986.3 898.6,986.0 899.6,986.4 900.6,986.2 901.6,986.3 902.6,986.3 903.6,986.3 904.6,986.2 905.6,985.9 906.6,986.4 907.6,986.4 908.6,986.2 909.6,986.2 910.6,986.3 911.6,985.9 912.6,986.4 913.6,986.0 914.2,995.4 915.2,995.4 915.4,987.2 916.6,986.5 917.6,986.6 918.6,987.0 919.6,986.6 920.6,987.0 921.6,987.1 922.6,986.8 923.6,986.7 924.6,986.8 925.6,986.9 926.6,987.0 927.6,986.9 928.6,986.9 929.6,986.5 930.6,986.6 931.6,986.6 932.6,987.0 933.6,986.7 934.6,986.8 935.6,986.5 936.6,986.5 937.6,986.6 938.6,986.9 939.6,986.9 940.6,986.9 941.6,986.7 942.6,986.8 943.6,986.8 944.6,991.2 945.6,991.1 946.6,990.6 947.6,991.6 948.6,990.7 949.6,991.7 950.6,991.6 951.6,990.5 952.6,991.1 953.6,991.5 954.6,991.7 955.6,991.0 956.6,990.8 957.6,990.8" fill="none" stroke="#2b9fe9" stroke-width="1.9" stroke-linejoin="round"/><path d="M881.8000000000001,989.0 V1017.5" stroke="#343840" stroke-width="0.9" opacity="0.75"/><path d="M925.4,989.0 V1017.5" stroke="#343840" stroke-width="0.9" opacity="0.75"/><path d="M943.9,989.0 V1017.5" stroke="#343840" stroke-width="0.9" opacity="0.75"/><path d="M947.3000000000001,989.0 V1017.5" stroke="#343840" stroke-width="0.9" opacity="0.75"/><polygon points="1047.6,1017.5 1047.6,1005.5 1051.6,1005.5 1051.6,997.9 1053.6,997.9 1053.6,995.4 1056.6,995.4 1056.6,997.9 1068.6,997.9 1068.6,995.4 1069.6,995.4 1069.6,997.9 1077.6,997.9 1077.6,995.4 1082.6,995.4 1082.6,997.9 1090.6,997.9 1090.6,995.4 1091.6,995.4 1091.6,997.9 1101.6,997.9 1101.6,995.4 1102.6,995.4 1102.6,997.9 1112.6,997.9 1112.6,999.0 1122.6,999.0 1122.6,995.4 1125.6,995.4 1125.6,1017.5" fill="url(#gf)"/><polyline points="1047.6,1005.5 1051.6,1005.5 1051.6,997.9 1053.6,997.9 1053.6,995.4 1056.6,995.4 1056.6,997.9 1068.6,997.9 1068.6,995.4 1069.6,995.4 1069.6,997.9 1077.6,997.9 1077.6,995.4 1082.6,995.4 1082.6,997.9 1090.6,997.9 1090.6,995.4 1091.6,995.4 1091.6,997.9 1101.6,997.9 1101.6,995.4 1102.6,995.4 1102.6,997.9 1112.6,997.9 1112.6,999.0 1122.6,999.0 1122.6,995.4 1125.6,995.4" fill="none" stroke="#7278f0" stroke-width="1.7"/><path d="M1049.8,997.0 V1017.5" stroke="#343840" stroke-width="0.9" opacity="0.75"/><path d="M1093.3999999999999,997.0 V1017.5" stroke="#343840" stroke-width="0.9" opacity="0.75"/><path d="M1111.8999999999999,997.0 V1017.5" stroke="#343840" stroke-width="0.9" opacity="0.75"/><path d="M1115.3,997.0 V1017.5" stroke="#343840" stroke-width="0.9" opacity="0.75"/></svg>
<span class="t" style="left:974.10px;top:460.01px;font-size:20.40px;color:#dcdcde;letter-spacing:0.712px;">47°</span>
<span class="t" style="left:1134.10px;top:460.01px;font-size:20.40px;color:#dcdcde;letter-spacing:-0.287px;">40%</span>
<svg class="b" style="left:1221.3px;top:461.2px" width="9.7" height="19.1" viewBox="0 0 9.6 20.6" preserveAspectRatio="none"><polygon points="2.1,0.5 6.3,0.3 5.5,5.5 9.3,4.4 2.5,20.3 4.4,9.4 0.2,10.3" fill="#8a8e98"/></svg>
<span class="t" style="left:1241.70px;top:460.01px;font-size:20.40px;color:#7f838c;letter-spacing:-0.450px;">92</span>
<span class="t" style="left:1270.72px;top:462.01px;font-size:18.13px;color:#7f838c;">w</span>
<span class="t" style="left:1339.30px;top:460.01px;font-size:20.00px;color:#c4c5c9;">-</span>
<span class="t" style="left:1411.70px;top:460.01px;font-size:20.00px;color:#c4c5c9;">-</span>
<span class="t" style="left:1471.70px;top:460.01px;font-size:20.00px;color:#c4c5c9;">-</span>
<span class="t" style="left:1540.50px;top:460.01px;font-size:20.00px;color:#c4c5c9;">-</span>
<span class="t" style="left:1618.30px;top:460.01px;font-size:20.00px;color:#c4c5c9;">-</span>
<span class="t" style="left:1696.40px;top:460.01px;font-size:20.00px;color:#c4c5c9;">-</span>
<span class="t" style="left:1759.00px;top:460.01px;font-size:20.00px;color:#c4c5c9;">-</span>
<svg class="b" style="left:1792.6px;top:458px;" width="31.5" height="22" viewBox="0 -1 31.5 22"><path fill="#d9d9db" d="M0.39,20.09 L0.31,19.50 L0.25,18.90 L0.21,18.30 L0.20,17.70 L0.21,17.10 L0.25,16.50 L0.31,15.90 L0.39,15.31 L1.87,15.54 L1.78,16.08 L1.72,16.62 L1.67,17.16 L1.65,17.70 L1.65,18.24 L1.67,18.79 L1.71,19.33 L1.77,19.87Z M0.65,14.00 L0.90,13.13 L1.19,12.28 L1.54,11.45 L1.93,10.64 L2.37,9.85 L2.85,9.09 L3.38,8.36 L3.95,7.66 L5.61,9.11 L5.07,9.66 L4.55,10.24 L4.06,10.86 L3.61,11.51 L3.20,12.19 L2.83,12.90 L2.50,13.63 L2.21,14.39Z M4.87,6.69 L5.61,6.02 L6.40,5.40 L7.22,4.83 L8.08,4.32 L8.97,3.86 L9.89,3.46 L10.84,3.13 L11.80,2.85 L12.65,6.25 L11.86,6.34 L11.08,6.49 L10.31,6.69 L9.54,6.94 L8.78,7.25 L8.03,7.61 L7.31,8.03 L6.61,8.49Z M12.84,2.63 L13.04,2.60 L13.24,2.57 L13.44,2.54 L13.64,2.51 L13.83,2.49 L14.03,2.47 L14.23,2.45 L14.43,2.44 L14.69,6.13 L14.54,6.13 L14.39,6.13 L14.23,6.13 L14.08,6.14 L13.93,6.14 L13.77,6.15 L13.62,6.16 L13.47,6.18Z M21.48,3.62 L21.84,3.78 L22.21,3.95 L22.56,4.13 L22.92,4.32 L23.27,4.52 L23.61,4.72 L23.94,4.94 L24.28,5.17 L21.52,9.10 L21.33,8.89 L21.13,8.69 L20.92,8.49 L20.71,8.30 L20.49,8.11 L20.27,7.93 L20.04,7.75 L19.80,7.57Z M25.02,5.73 L25.80,6.39 L26.53,7.10 L27.21,7.85 L27.84,8.65 L28.41,9.49 L28.93,10.37 L29.39,11.28 L29.78,12.22 L24.37,14.30 L24.21,13.67 L24.01,13.05 L23.77,12.44 L23.48,11.85 L23.15,11.26 L22.78,10.70 L22.37,10.16 L21.91,9.64Z M30.13,13.23 L30.36,14.06 L30.54,14.91 L30.68,15.77 L30.76,16.63 L30.80,17.50 L30.79,18.37 L30.72,19.23 L30.61,20.09 L24.39,19.11 L24.49,18.61 L24.57,18.10 L24.61,17.58 L24.63,17.06 L24.61,16.54 L24.57,16.02 L24.50,15.50 L24.39,14.98Z "/><path fill="#d9d9db" stroke="#343840" stroke-width="1.5" stroke-linejoin="round" style="paint-order:stroke" d="M19.9,-0.3 L15.75,18.0 A2.45,2.45 0 1 1 11.15,16.5 Z"/><circle cx="13.4" cy="17.4" r="0.95" fill="#343840"/></svg>
<div class="b" style="left:41px;top:504.5px;width:1800px;height:63.5px;background:#343840;"></div>
<span class="t" style="left:53.60px;top:515.20px;font-size:20.00px;color:#d8d8da;letter-spacing:0.025px;">GPU 7</span>
<span class="t" style="left:53.60px;top:542.81px;font-size:17.60px;color:#858a94;letter-spacing:0.225px;">0d:00.0</span>
<span class="t" style="left:136.60px;top:515.20px;font-size:20.00px;color:#c94aab;letter-spacing:0.227px;">Radeon RX 570</span>
<span class="t" style="left:288.50px;top:518.20px;font-size:17.60px;color:#9094a0;letter-spacing:0.362px;">8192M · Sapphire</span>
<span class="t" style="left:136.60px;top:541.20px;font-size:17.60px;color:#9094a0;letter-spacing:0.087px;">Samsung K4G80325FB 113-2E366AU-X4Z</span>
<span class="t" style="left:758.30px;top:525.21px;font-size:20.40px;color:#dcdcde;letter-spacing:0.400px;">29.52</span>
<span class="t" style="left:817.40px;top:531.21px;font-size:13.00px;color:#dcdcde;letter-spacing:0.950px;">MH</span>
<svg class="b" style="left:870px;top:504.5px" width="270" height="63" viewBox="870 1034.5 270 63"><polygon points="879.6,1083.0 879.6,1058.3 880.6,1059.4 881.6,1059.3 882.6,1060.3 883.6,1060.5 884.6,1061.5 885.6,1062.6 886.6,1062.4 887.6,1063.4 888.6,1063.1 889.6,1063.5 890.6,1063.3 891.6,1062.8 891.6,1059.2 892.6,1058.8 893.6,1058.5 894.6,1058.1 895.6,1058.0 896.6,1058.2 897.6,1058.1 898.6,1057.9 899.6,1057.7 900.6,1057.9 901.6,1057.9 902.6,1058.2 903.6,1057.7 904.6,1058.2 905.6,1058.2 906.6,1057.7 907.6,1058.3 908.6,1058.1 909.6,1058.3 910.6,1057.9 911.6,1057.9 912.6,1057.9 913.6,1058.3 914.2,1065.9 915.2,1065.9 915.4,1059.0 916.6,1058.7 917.6,1058.5 918.6,1058.5 919.6,1058.4 920.6,1058.3 921.6,1058.3 922.6,1058.8 923.6,1058.4 924.6,1058.9 925.6,1058.4 926.6,1058.4 927.6,1058.6 928.6,1058.4 929.6,1058.5 930.6,1058.9 931.6,1058.9 932.6,1058.8 933.6,1058.7 934.6,1058.9 935.6,1058.9 936.6,1058.6 937.6,1058.8 938.6,1058.3 939.6,1058.8 940.6,1058.6 941.6,1058.8 942.6,1058.7 943.6,1058.5 944.6,1062.1 945.6,1061.5 946.6,1062.5 947.6,1061.6 948.6,1062.0 949.6,1061.8 950.6,1061.8 951.6,1062.3 952.6,1062.6 953.6,1061.7 954.6,1062.2 955.6,1061.8 956.6,1062.1 957.6,1061.9 957.6,1083.0" fill="url(#gt)"/><polyline points="879.6,1058.3 880.6,1059.4 881.6,1059.3 882.6,1060.3 883.6,1060.5 884.6,1061.5 885.6,1062.6 886.6,1062.4 887.6,1063.4 888.6,1063.1 889.6,1063.5 890.6,1063.3 891.6,1062.8 891.6,1059.2 892.6,1058.8 893.6,1058.5 894.6,1058.1 895.6,1058.0 896.6,1058.2 897.6,1058.1 898.6,1057.9 899.6,1057.7 900.6,1057.9 901.6,1057.9 902.6,1058.2 903.6,1057.7 904.6,1058.2 905.6,1058.2 906.6,1057.7 907.6,1058.3 908.6,1058.1 909.6,1058.3 910.6,1057.9 911.6,1057.9 912.6,1057.9 913.6,1058.3 914.2,1065.9 915.2,1065.9 915.4,1059.0 916.6,1058.7 917.6,1058.5 918.6,1058.5 919.6,1058.4 920.6,1058.3 921.6,1058.3 922.6,1058.8 923.6,1058.4 924.6,1058.9 925.6,1058.4 926.6,1058.4 927.6,1058.6 928.6,1058.4 929.6,1058.5 930.6,1058.9 931.6,1058.9 932.6,1058.8 933.6,1058.7 934.6,1058.9 935.6,1058.9 936.6,1058.6 937.6,1058.8 938.6,1058.3 939.6,1058.8 940.6,1058.6 941.6,1058.8 942.6,1058.7 943.6,1058.5 944.6,1062.1 945.6,1061.5 946.6,1062.5 947.6,1061.6 948.6,1062.0 949.6,1061.8 950.6,1061.8 951.6,1062.3 952.6,1062.6 953.6,1061.7 954.6,1062.2 955.6,1061.8 956.6,1062.1 957.6,1061.9" fill="none" stroke="#2b9fe9" stroke-width="1.9" stroke-linejoin="round"/><path d="M881.8000000000001,1054.5 V1083.0" stroke="#343840" stroke-width="0.9" opacity="0.75"/><path d="M925.4,1054.5 V1083.0" stroke="#343840" stroke-width="0.9" opacity="0.75"/><path d="M943.9,1054.5 V1083.0" stroke="#343840" stroke-width="0.9" opacity="0.75"/><path d="M947.3000000000001,1054.5 V1083.0" stroke="#343840" stroke-width="0.9" opacity="0.75"/><polygon points="1047.6,1083.0 1047.6,1071.5 1051.6,1071.5 1051.6,1065.1 1057.6,1065.1 1057.6,1062.5 1060.6,1062.5 1060.6,1061.7 1082.6,1061.7 1082.6,1064.3 1100.6,1064.3 1100.6,1061.7 1112.6,1061.7 1112.6,1064.3 1116.6,1064.3 1116.6,1061.7 1118.6,1061.7 1118.6,1064.3 1122.6,1064.3 1122.6,1061.1 1125.6,1061.1 1125.6,1083.0" fill="url(#gf)"/><polyline points="1047.6,1071.5 1051.6,1071.5 1051.6,1065.1 1057.6,1065.1 1057.6,1062.5 1060.6,1062.5 1060.6,1061.7 1082.6,1061.7 1082.6,1064.3 1100.6,1064.3 1100.6,1061.7 1112.6,1061.7 1112.6,1064.3 1116.6,1064.3 1116.6,1061.7 1118.6,1061.7 1118.6,1064.3 1122.6,1064.3 1122.6,1061.1 1125.6,1061.1" fill="none" stroke="#7278f0" stroke-width="1.7"/><path d="M1049.8,1062.5 V1083.0" stroke="#343840" stroke-width="0.9" opacity="0.75"/><path d="M1093.3999999999999,1062.5 V1083.0" stroke="#343840" stroke-width="0.9" opacity="0.75"/><path d="M1111.8999999999999,1062.5 V1083.0" stroke="#343840" stroke-width="0.9" opacity="0.75"/><path d="M1115.3,1062.5 V1083.0" stroke="#343840" stroke-width="0.9" opacity="0.75"/></svg>
<span class="t" style="left:974.10px;top:525.21px;font-size:20.40px;color:#dcdcde;letter-spacing:0.712px;">52°</span>
<span class="t" style="left:1134.10px;top:525.21px;font-size:20.40px;color:#dcdcde;letter-spacing:-0.287px;">41%</span>
<svg class="b" style="left:1209.2px;top:526.7px" width="9.7" height="19.1" viewBox="0 0 9.6 20.6" preserveAspectRatio="none"><polygon points="2.1,0.5 6.3,0.3 5.5,5.5 9.3,4.4 2.5,20.3 4.4,9.4 0.2,10.3" fill="#8a8e98"/></svg>
<span class="t" style="left:1229.60px;top:525.21px;font-size:20.40px;color:#7f838c;letter-spacing:0.200px;">101</span>
<span class="t" style="left:1270.72px;top:527.21px;font-size:18.13px;color:#7f838c;">w</span>
<span class="t" style="left:1339.30px;top:525.20px;font-size:20.00px;color:#c4c5c9;">-</span>
<span class="t" style="left:1411.70px;top:525.20px;font-size:20.00px;color:#c4c5c9;">-</span>
<span class="t" style="left:1471.70px;top:525.20px;font-size:20.00px;color:#c4c5c9;">-</span>
<span class="t" style="left:1540.50px;top:525.20px;font-size:20.00px;color:#c4c5c9;">-</span>
<span class="t" style="left:1618.30px;top:525.20px;font-size:20.00px;color:#c4c5c9;">-</span>
<span class="t" style="left:1696.40px;top:525.20px;font-size:20.00px;color:#c4c5c9;">-</span>
<span class="t" style="left:1759.00px;top:525.20px;font-size:20.00px;color:#c4c5c9;">-</span>
<svg class="b" style="left:1792.6px;top:523.5px;" width="31.5" height="22" viewBox="0 -1 31.5 22"><path fill="#d9d9db" d="M0.39,20.09 L0.31,19.50 L0.25,18.90 L0.21,18.30 L0.20,17.70 L0.21,17.10 L0.25,16.50 L0.31,15.90 L0.39,15.31 L1.87,15.54 L1.78,16.08 L1.72,16.62 L1.67,17.16 L1.65,17.70 L1.65,18.24 L1.67,18.79 L1.71,19.33 L1.77,19.87Z M0.65,14.00 L0.90,13.13 L1.19,12.28 L1.54,11.45 L1.93,10.64 L2.37,9.85 L2.85,9.09 L3.38,8.36 L3.95,7.66 L5.61,9.11 L5.07,9.66 L4.55,10.24 L4.06,10.86 L3.61,11.51 L3.20,12.19 L2.83,12.90 L2.50,13.63 L2.21,14.39Z M4.87,6.69 L5.61,6.02 L6.40,5.40 L7.22,4.83 L8.08,4.32 L8.97,3.86 L9.89,3.46 L10.84,3.13 L11.80,2.85 L12.65,6.25 L11.86,6.34 L11.08,6.49 L10.31,6.69 L9.54,6.94 L8.78,7.25 L8.03,7.61 L7.31,8.03 L6.61,8.49Z M12.84,2.63 L13.04,2.60 L13.24,2.57 L13.44,2.54 L13.64,2.51 L13.83,2.49 L14.03,2.47 L14.23,2.45 L14.43,2.44 L14.69,6.13 L14.54,6.13 L14.39,6.13 L14.23,6.13 L14.08,6.14 L13.93,6.14 L13.77,6.15 L13.62,6.16 L13.47,6.18Z M21.48,3.62 L21.84,3.78 L22.21,3.95 L22.56,4.13 L22.92,4.32 L23.27,4.52 L23.61,4.72 L23.94,4.94 L24.28,5.17 L21.52,9.10 L21.33,8.89 L21.13,8.69 L20.92,8.49 L20.71,8.30 L20.49,8.11 L20.27,7.93 L20.04,7.75 L19.80,7.57Z M25.02,5.73 L25.80,6.39 L26.53,7.10 L27.21,7.85 L27.84,8.65 L28.41,9.49 L28.93,10.37 L29.39,11.28 L29.78,12.22 L24.37,14.30 L24.21,13.67 L24.01,13.05 L23.77,12.44 L23.48,11.85 L23.15,11.26 L22.78,10.70 L22.37,10.16 L21.91,9.64Z M30.13,13.23 L30.36,14.06 L30.54,14.91 L30.68,15.77 L30.76,16.63 L30.80,17.50 L30.79,18.37 L30.72,19.23 L30.61,20.09 L24.39,19.11 L24.49,18.61 L24.57,18.10 L24.61,17.58 L24.63,17.06 L24.61,16.54 L24.57,16.02 L24.50,15.50 L24.39,14.98Z "/><path fill="#d9d9db" stroke="#343840" stroke-width="1.5" stroke-linejoin="round" style="paint-order:stroke" d="M19.9,-0.3 L15.75,18.0 A2.45,2.45 0 1 1 11.15,16.5 Z"/><circle cx="13.4" cy="17.4" r="0.95" fill="#343840"/></svg>
<div class="b" style="left:41px;top:570px;width:1800px;height:63.5px;background:#343840;"></div>
<span class="t" style="left:53.60px;top:581.01px;font-size:20.00px;color:#d8d8da;letter-spacing:0.025px;">GPU 8</span>
<span class="t" style="left:53.60px;top:608.61px;font-size:17.60px;color:#858a94;letter-spacing:0.225px;">0e:00.0</span>
<span class="t" style="left:136.60px;top:581.01px;font-size:20.00px;color:#c94aab;letter-spacing:0.227px;">Radeon RX 570</span>
<span class="t" style="left:288.50px;top:584.01px;font-size:17.60px;color:#9094a0;letter-spacing:0.362px;">8192M · Sapphire</span>
<span class="t" style="left:136.60px;top:607.01px;font-size:17.60px;color:#9094a0;letter-spacing:0.280px;">Micron MT51J256M32 113-5E353BU-O6G</span>
<span class="t" style="left:758.30px;top:591.01px;font-size:20.40px;color:#dcdcde;letter-spacing:0.400px;">31.08</span>
<span class="t" style="left:817.40px;top:597.00px;font-size:13.00px;color:#dcdcde;letter-spacing:0.950px;">MH</span>
<svg class="b" style="left:870px;top:570px" width="270" height="63" viewBox="870 1100 270 63"><polygon points="879.6,1148.5 879.6,1123.4 880.6,1123.7 881.6,1124.2 882.6,1124.9 883.6,1126.2 884.6,1126.3 885.6,1126.6 886.6,1127.9 887.6,1128.3 888.6,1127.7 889.6,1127.4 890.6,1127.5 891.6,1127.4 891.6,1124.2 892.6,1123.4 893.6,1123.2 894.6,1123.2 895.6,1123.2 896.6,1123.3 897.6,1123.4 898.6,1123.3 899.6,1122.9 900.6,1122.9 901.6,1123.0 902.6,1122.9 903.6,1122.9 904.6,1122.7 905.6,1122.8 906.6,1123.3 907.6,1122.7 908.6,1123.0 909.6,1123.1 910.6,1123.3 911.6,1122.8 912.6,1122.8 913.6,1122.8 914.2,1131.0 915.2,1131.0 915.4,1124.0 916.6,1123.5 917.6,1123.6 918.6,1123.9 919.6,1123.8 920.6,1123.9 921.6,1123.3 922.6,1123.3 923.6,1123.7 924.6,1123.9 925.6,1123.6 926.6,1123.7 927.6,1123.3 928.6,1123.5 929.6,1123.9 930.6,1123.8 931.6,1123.8 932.6,1123.9 933.6,1123.4 934.6,1123.3 935.6,1123.4 936.6,1123.6 937.6,1123.7 938.6,1123.9 939.6,1123.8 940.6,1123.7 941.6,1123.8 942.6,1123.6 943.6,1123.6 944.6,1126.6 945.6,1125.9 946.6,1126.8 947.6,1126.2 948.6,1127.0 949.6,1126.7 950.6,1126.3 951.6,1126.1 952.6,1126.2 953.6,1126.7 954.6,1126.7 955.6,1126.0 956.6,1126.0 957.6,1126.5 957.6,1148.5" fill="url(#gt)"/><polyline points="879.6,1123.4 880.6,1123.7 881.6,1124.2 882.6,1124.9 883.6,1126.2 884.6,1126.3 885.6,1126.6 886.6,1127.9 887.6,1128.3 888.6,1127.7 889.6,1127.4 890.6,1127.5 891.6,1127.4 891.6,1124.2 892.6,1123.4 893.6,1123.2 894.6,1123.2 895.6,1123.2 896.6,1123.3 897.6,1123.4 898.6,1123.3 899.6,1122.9 900.6,1122.9 901.6,1123.0 902.6,1122.9 903.6,1122.9 904.6,1122.7 905.6,1122.8 906.6,1123.3 907.6,1122.7 908.6,1123.0 909.6,1123.1 910.6,1123.3 911.6,1122.8 912.6,1122.8 913.6,1122.8 914.2,1131.0 915.2,1131.0 915.4,1124.0 916.6,1123.5 917.6,1123.6 918.6,1123.9 919.6,1123.8 920.6,1123.9 921.6,1123.3 922.6,1123.3 923.6,1123.7 924.6,1123.9 925.6,1123.6 926.6,1123.7 927.6,1123.3 928.6,1123.5 929.6,1123.9 930.6,1123.8 931.6,1123.8 932.6,1123.9 933.6,1123.4 934.6,1123.3 935.6,1123.4 936.6,1123.6 937.6,1123.7 938.6,1123.9 939.6,1123.8 940.6,1123.7 941.6,1123.8 942.6,1123.6 943.6,1123.6 944.6,1126.6 945.6,1125.9 946.6,1126.8 947.6,1126.2 948.6,1127.0 949.6,1126.7 950.6,1126.3 951.6,1126.1 952.6,1126.2 953.6,1126.7 954.6,1126.7 955.6,1126.0 956.6,1126.0 957.6,1126.5" fill="none" stroke="#2b9fe9" stroke-width="1.9" stroke-linejoin="round"/><path d="M881.8000000000001,1120.0 V1148.5" stroke="#343840" stroke-width="0.9" opacity="0.75"/><path d="M925.4,1120.0 V1148.5" stroke="#343840" stroke-width="0.9" opacity="0.75"/><path d="M943.9,1120.0 V1148.5" stroke="#343840" stroke-width="0.9" opacity="0.75"/><path d="M947.3000000000001,1120.0 V1148.5" stroke="#343840" stroke-width="0.9" opacity="0.75"/><polygon points="1047.6,1148.5 1047.6,1136.5 1051.6,1136.5 1051.6,1128.6 1059.6,1128.6 1059.6,1126.4 1067.6,1126.4 1067.6,1125.2 1074.6,1125.2 1074.6,1123.9 1082.6,1123.9 1082.6,1129.3 1089.6,1129.3 1089.6,1126.4 1112.6,1126.4 1112.6,1129.3 1116.6,1129.3 1116.6,1126.6 1118.6,1126.6 1118.6,1129.3 1122.6,1129.3 1122.6,1126.0 1125.6,1126.0 1125.6,1148.5" fill="url(#gf)"/><polyline points="1047.6,1136.5 1051.6,1136.5 1051.6,1128.6 1059.6,1128.6 1059.6,1126.4 1067.6,1126.4 1067.6,1125.2 1074.6,1125.2 1074.6,1123.9 1082.6,1123.9 1082.6,1129.3 1089.6,1129.3 1089.6,1126.4 1112.6,1126.4 1112.6,1129.3 1116.6,1129.3 1116.6,1126.6 1118.6,1126.6 1118.6,1129.3 1122.6,1129.3 1122.6,1126.0 1125.6,1126.0" fill="none" stroke="#7278f0" stroke-width="1.7"/><path d="M1049.8,1128.0 V1148.5" stroke="#343840" stroke-width="0.9" opacity="0.75"/><path d="M1093.3999999999999,1128.0 V1148.5" stroke="#343840" stroke-width="0.9" opacity="0.75"/><path d="M1111.8999999999999,1128.0 V1148.5" stroke="#343840" stroke-width="0.9" opacity="0.75"/><path d="M1115.3,1128.0 V1148.5" stroke="#343840" stroke-width="0.9" opacity="0.75"/></svg>
<span class="t" style="left:974.10px;top:591.01px;font-size:20.40px;color:#dcdcde;letter-spacing:0.712px;">53°</span>
<span class="t" style="left:1134.10px;top:591.01px;font-size:20.40px;color:#dcdcde;letter-spacing:-0.287px;">41%</span>
<svg class="b" style="left:1221.3px;top:592.2px" width="9.7" height="19.1" viewBox="0 0 9.6 20.6" preserveAspectRatio="none"><polygon points="2.1,0.5 6.3,0.3 5.5,5.5 9.3,4.4 2.5,20.3 4.4,9.4 0.2,10.3" fill="#8a8e98"/></svg>
<span class="t" style="left:1241.70px;top:591.01px;font-size:20.40px;color:#7f838c;letter-spacing:-0.450px;">88</span>
<span class="t" style="left:1270.72px;top:593.01px;font-size:18.13px;color:#7f838c;">w</span>
<span class="t" style="left:1339.30px;top:591.01px;font-size:20.00px;color:#c4c5c9;">-</span>
<span class="t" style="left:1411.70px;top:591.01px;font-size:20.00px;color:#c4c5c9;">-</span>
<span class="t" style="left:1471.70px;top:591.01px;font-size:20.00px;color:#c4c5c9;">-</span>
<span class="t" style="left:1540.50px;top:591.01px;font-size:20.00px;color:#c4c5c9;">-</span>
<span class="t" style="left:1618.30px;top:591.01px;font-size:20.00px;color:#c4c5c9;">-</span>
<span class="t" style="left:1696.40px;top:591.01px;font-size:20.00px;color:#c4c5c9;">-</span>
<span class="t" style="left:1759.00px;top:591.01px;font-size:20.00px;color:#c4c5c9;">-</span>
<svg class="b" style="left:1792.6px;top:589px;" width="31.5" height="22" viewBox="0 -1 31.5 22"><path fill="#d9d9db" d="M0.39,20.09 L0.31,19.50 L0.25,18.90 L0.21,18.30 L0.20,17.70 L0.21,17.10 L0.25,16.50 L0.31,15.90 L0.39,15.31 L1.87,15.54 L1.78,16.08 L1.72,16.62 L1.67,17.16 L1.65,17.70 L1.65,18.24 L1.67,18.79 L1.71,19.33 L1.77,19.87Z M0.65,14.00 L0.90,13.13 L1.19,12.28 L1.54,11.45 L1.93,10.64 L2.37,9.85 L2.85,9.09 L3.38,8.36 L3.95,7.66 L5.61,9.11 L5.07,9.66 L4.55,10.24 L4.06,10.86 L3.61,11.51 L3.20,12.19 L2.83,12.90 L2.50,13.63 L2.21,14.39Z M4.87,6.69 L5.61,6.02 L6.40,5.40 L7.22,4.83 L8.08,4.32 L8.97,3.86 L9.89,3.46 L10.84,3.13 L11.80,2.85 L12.65,6.25 L11.86,6.34 L11.08,6.49 L10.31,6.69 L9.54,6.94 L8.78,7.25 L8.03,7.61 L7.31,8.03 L6.61,8.49Z M12.84,2.63 L13.04,2.60 L13.24,2.57 L13.44,2.54 L13.64,2.51 L13.83,2.49 L14.03,2.47 L14.23,2.45 L14.43,2.44 L14.69,6.13 L14.54,6.13 L14.39,6.13 L14.23,6.13 L14.08,6.14 L13.93,6.14 L13.77,6.15 L13.62,6.16 L13.47,6.18Z M21.48,3.62 L21.84,3.78 L22.21,3.95 L22.56,4.13 L22.92,4.32 L23.27,4.52 L23.61,4.72 L23.94,4.94 L24.28,5.17 L21.52,9.10 L21.33,8.89 L21.13,8.69 L20.92,8.49 L20.71,8.30 L20.49,8.11 L20.27,7.93 L20.04,7.75 L19.80,7.57Z M25.02,5.73 L25.80,6.39 L26.53,7.10 L27.21,7.85 L27.84,8.65 L28.41,9.49 L28.93,10.37 L29.39,11.28 L29.78,12.22 L24.37,14.30 L24.21,13.67 L24.01,13.05 L23.77,12.44 L23.48,11.85 L23.15,11.26 L22.78,10.70 L22.37,10.16 L21.91,9.64Z M30.13,13.23 L30.36,14.06 L30.54,14.91 L30.68,15.77 L30.76,16.63 L30.80,17.50 L30.79,18.37 L30.72,19.23 L30.61,20.09 L24.39,19.11 L24.49,18.61 L24.57,18.10 L24.61,17.58 L24.63,17.06 L24.61,16.54 L24.57,16.02 L24.50,15.50 L24.39,14.98Z "/><path fill="#d9d9db" stroke="#343840" stroke-width="1.5" stroke-linejoin="round" style="paint-order:stroke" d="M19.9,-0.3 L15.75,18.0 A2.45,2.45 0 1 1 11.15,16.5 Z"/><circle cx="13.4" cy="17.4" r="0.95" fill="#343840"/></svg>
</div>
<div class="b" style="left:41px;top:1218px;width:1800px;height:22px;background:#ffffff;"></div>
<div class="b" style="left:42px;top:1219px;width:1798px;height:20px;background:#cfcfcf;"></div>
<div class="b" style="left:42px;top:1219px;width:21px;height:20px;background:#f0f0f0;"></div>
<div class="b" style="left:1815px;top:1219px;width:25px;height:20px;background:#f0f0f0;"></div>
<svg class="b" style="left:41px;top:1218px" width="22" height="22" viewBox="0 0 22 22"><path d="M13.6,8.6 L9.8,11.6 L13.6,14.6" fill="none" stroke="#b2b2b2" stroke-width="2.4"/></svg>
<svg class="b" style="left:1816px;top:1218px" width="25" height="22" viewBox="0 0 25 22"><path d="M12.4,8.4 L16.6,11.5 L12.4,14.6" fill="none" stroke="#505050" stroke-width="2.5"/></svg>
<div class="b" style="left:41px;top:1250px;width:426px;height:84px;background:#282b35;border-radius:4px;"></div>
<div class="b" style="left:475px;top:1250px;width:180px;height:84px;background:#282b35;border-radius:4px;"></div>
<div class="b" style="left:662px;top:1250px;width:180px;height:84px;background:#282b35;border-radius:0 0 4px 4px;"></div>
<div class="b" style="left:850px;top:1250px;width:191px;height:84px;background:#282b35;border-radius:4px;"></div>
<div class="b" style="left:1049px;top:1250px;width:257px;height:84px;background:#282b35;border-radius:4px;"></div>
<div class="b" style="left:1314px;top:1250px;width:180px;height:84px;background:#282b35;border-radius:4px;"></div>
<div class="b" style="left:662px;top:1250px;width:180px;height:3px;background:#3a3d47;"></div>
<div class="b" style="left:691px;top:1250px;width:151px;height:3px;background:#84c441;"></div>
<span class="t" style="left:53.40px;top:1267.92px;font-size:26.00px;color:#dededf;letter-spacing:0.592px;">0.07</span>
<span class="t" style="left:110.90px;top:1274.90px;font-size:18.54px;color:#dededf;letter-spacing:0.058px;">1min</span>
<span class="t" style="left:194.60px;top:1267.92px;font-size:26.00px;color:#dededf;letter-spacing:0.758px;">0.04</span>
<span class="t" style="left:251.50px;top:1274.90px;font-size:18.54px;color:#dededf;letter-spacing:0.392px;">5min</span>
<span class="t" style="left:335.70px;top:1267.92px;font-size:26.00px;color:#dededf;letter-spacing:0.592px;">0.06</span>
<span class="t" style="left:392.60px;top:1274.90px;font-size:18.54px;color:#dededf;letter-spacing:0.375px;">15min</span>
<span class="t" style="left:51.90px;top:1309.20px;font-size:16.00px;color:#8b8f98;letter-spacing:1.435px;">CHARGE MOYENNE</span>
<span class="t" style="left:487.90px;top:1267.92px;font-size:26.00px;color:#dededf;letter-spacing:0.088px;">1.6</span>
<span class="t" style="left:528.20px;top:1274.91px;font-size:18.00px;color:#dededf;letter-spacing:-0.300px;">Gb</span>
<span class="t" style="left:485.90px;top:1309.20px;font-size:16.00px;color:#8b8f98;letter-spacing:1.011px;">ESPACE LIBRE</span>
<span class="t" style="left:675.40px;top:1267.92px;font-size:26.00px;color:#dededf;letter-spacing:-0.162px;">6.5</span>
<span class="t" style="left:716.20px;top:1275.92px;font-size:17.75px;color:#dededf;letter-spacing:-0.425px;">Gb</span>
<span class="t" style="left:673.40px;top:1309.20px;font-size:16.00px;color:#8b8f98;letter-spacing:1.381px;">RAM LIBRE</span>
<svg class="b" style="left:868px;top:1265.5px" width="12.8" height="26.3" viewBox="0 0 9.6 20.6" preserveAspectRatio="none"><polygon points="2.1,0.5 6.3,0.3 5.5,5.5 9.3,4.4 2.5,20.3 4.4,9.4 0.2,10.3" fill="#e4e4e6"/></svg>
<span class="t" style="left:887.50px;top:1267.92px;font-size:26.00px;color:#dededf;letter-spacing:0.769px;">832.0</span>
<span class="t" style="left:959.12px;top:1270.90px;font-size:23.69px;color:#dededf;">w</span>
<span class="t" style="left:860.70px;top:1309.40px;font-size:16.00px;color:#8b8f98;letter-spacing:2.191px;">CONSOMMATION</span>
<svg class="b" style="left:1061.8px;top:1269.2px" width="19.8" height="20.9" viewBox="0 0 17.4 18.3" preserveAspectRatio="none"><path fill="#e0e0e2" d="M3.95,2.45 L3.95,15.8 L1.1,13.5 Q0.6,13 0.6,12.3 L0.6,6 Q0.6,5.3 1.1,4.8 Z"/><path fill="#e0e0e2" d="M13.6,2.45 L13.6,15.8 L16.3,13.5 Q16.8,13 16.8,12.3 L16.8,6 Q16.8,5.3 16.3,4.8 Z"/><rect x="6.7" y="0.1" width="3.95" height="7.55" rx="1.1" fill="#e0e0e2"/><rect x="6.7" y="10.4" width="3.95" height="7.75" rx="1.1" fill="#e0e0e2"/></svg>
<span class="t" style="left:1089.90px;top:1267.92px;font-size:26.00px;color:#dededf;letter-spacing:0.544px;">0.6-56@190705</span>
<span class="t" style="left:1059.70px;top:1305.11px;font-size:16.00px;color:#8b8f98;letter-spacing:1.389px;">VERSION DE L&#x27;OS</span>
<svg class="b" style="left:1243px;top:1299px" width="29" height="29" viewBox="0 0 29 29"><circle cx="14.6" cy="14.6" r="12.4" fill="none" stroke="#3b8df0" stroke-width="2"/></svg>
<span class="t" style="left:1254.60px;top:1308.61px;font-size:15.00px;color:#3b8df0;font-weight:700;font-family:'Liberation Mono',monospace;">i</span>
<span class="t" style="left:1324.70px;top:1261.00px;font-size:17.50px;color:#d04db5;">A</span>
<span class="t" style="left:1344.30px;top:1261.00px;font-size:17.50px;color:#dededf;letter-spacing:0.387px;">18.10</span>
<span class="t" style="left:1325.30px;top:1285.11px;font-size:17.50px;color:#84c441;">N</span>
<span class="t" style="left:1345.40px;top:1285.11px;font-size:17.50px;color:#dededf;letter-spacing:0.480px;">418.56</span>
<span class="t" style="left:1325.30px;top:1309.40px;font-size:16.00px;color:#8b8f98;letter-spacing:1.029px;">PILOTES</span>
<span class="t" style="left:43.30px;top:1368.01px;font-size:19.78px;color:#8b8f98;letter-spacing:0.225px;">Carte mère</span>
<span class="t" style="left:154.70px;top:1368.00px;font-size:19.20px;color:#e4e4e6;letter-spacing:-0.397px;">B250 MINING EXPERT ASUSTeK COMPUTER INC.</span>
<span class="t" style="left:43.30px;top:1408.02px;font-size:18.20px;color:#8b8f98;letter-spacing:-0.538px;">CPU</span>
<span class="t" style="left:90.70px;top:1407.00px;font-size:19.20px;color:#e4e4e6;letter-spacing:-0.064px;">2 × Intel(R) Celeron(R) CPU G3900 @ 2.80GHz</span>
<span class="t" style="left:43.30px;top:1446.01px;font-size:19.78px;color:#8b8f98;letter-spacing:0.100px;">Disque</span>
<span class="t" style="left:115.40px;top:1446.00px;font-size:19.20px;color:#e4e4e6;letter-spacing:0.102px;">SanDisk 16.0GB</span>
<span class="t" style="left:503.00px;top:1409.00px;font-size:17.70px;color:#8ac43f;letter-spacing:-0.538px;-webkit-text-stroke:0.64px #8ac43f;">AES</span>
<span class="t" style="left:942.90px;top:1368.01px;font-size:19.78px;color:#8b8f98;letter-spacing:0.025px;">Type du Système</span>
<span class="t" style="left:1106.70px;top:1368.01px;font-size:19.78px;color:#e4e4e6;letter-spacing:0.744px;">linux</span>
<span class="t" style="left:942.90px;top:1407.01px;font-size:19.78px;color:#8b8f98;letter-spacing:0.195px;">Kernel</span>
<span class="t" style="left:1011.10px;top:1407.00px;font-size:19.20px;color:#e4e4e6;letter-spacing:0.369px;">4.13.16-hiveos</span>
<span class="t" style="left:942.90px;top:1446.01px;font-size:19.78px;color:#8b8f98;letter-spacing:0.368px;">IP publique</span>
<span class="t" style="left:1055.20px;top:1446.01px;font-size:19.78px;color:#e4e4e6;letter-spacing:0.315px;">xx.xxx.xxx.xxx [lfbn-ncy-x-xxx-xxx.wxx-xxx.abo.wanadoo.fr]</span>
<span class="t" style="left:942.90px;top:1485.01px;font-size:19.78px;color:#8b8f98;letter-spacing:-0.150px;">IP locale</span>
<span class="t" style="left:1027.80px;top:1485.00px;font-size:19.20px;color:#e4e4e6;letter-spacing:0.280px;">192.168.1.23</span>
<span class="t" style="left:942.90px;top:1524.01px;font-size:19.78px;color:#8b8f98;letter-spacing:-0.027px;">Adresse Mac</span>
<span class="t" style="left:1068.70px;top:1524.00px;font-size:19.20px;color:#e4e4e6;letter-spacing:0.297px;">18:31:bf:b7:2c:6c</span>
</body></html>
